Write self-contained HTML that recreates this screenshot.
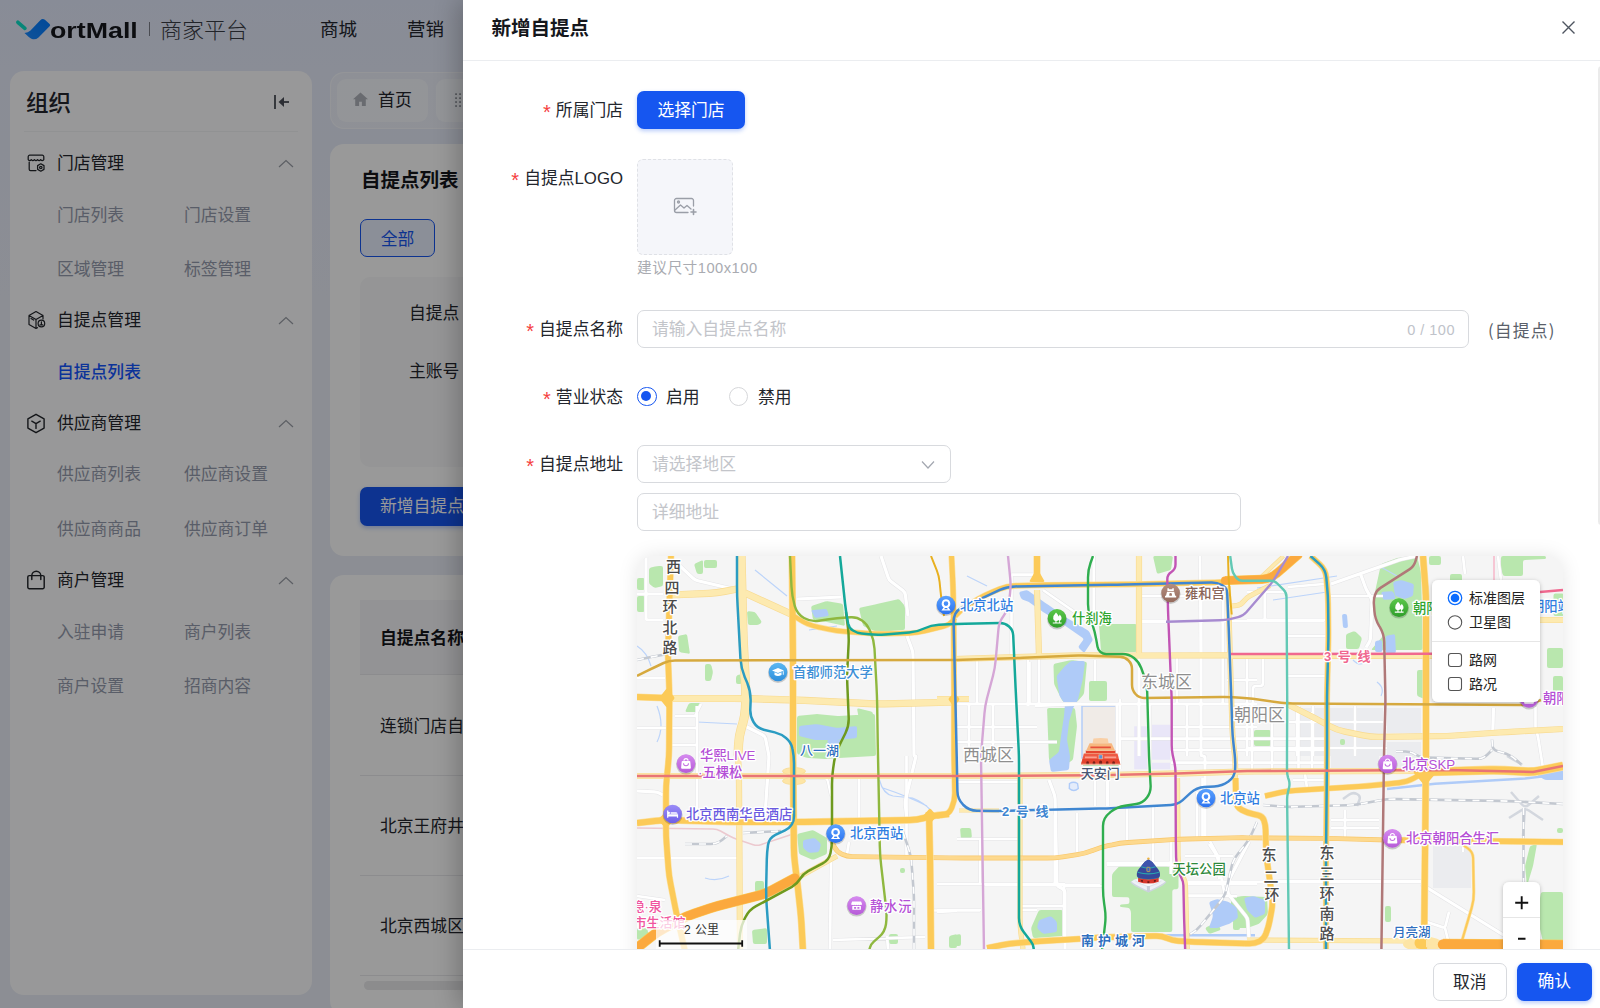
<!DOCTYPE html>
<html lang="zh-CN">
<head>
<meta charset="utf-8">
<title>新增自提点</title>
<style>
*{box-sizing:border-box;margin:0;padding:0}
html,body{width:1600px;height:1008px;overflow:hidden}
body{font-family:"Liberation Sans","Noto Sans CJK SC",sans-serif;color:#1d2129;background:#eef0f8;position:relative}
.abs{position:absolute}
/* ---------- background page ---------- */
#bg{position:absolute;left:0;top:0;width:1600px;height:1008px;background:linear-gradient(180deg,#e3eafc 0,#e6ebfa 70px,#e9edf7 300px,#e9edf7 100%)}
#topbar{position:absolute;left:0;top:0;width:1600px;height:58px}
.t{position:absolute;white-space:nowrap;line-height:1}
.card{position:absolute;background:#fff;border-radius:14px}
#side{left:10px;top:71px;width:302px;height:924px;background:rgba(255,255,255,.93)}
.mg{font-size:16.8px;color:#23262d;left:57px}
.mi{font-size:16.8px;color:#959bad}
.chev{position:absolute;left:278px;width:16px;height:9px}
/* ---------- mask ---------- */
#mask{position:absolute;left:0;top:0;width:1600px;height:1008px;background:rgba(0,0,0,.4)}
/* ---------- drawer ---------- */
#drawer{position:absolute;left:463px;top:0;width:1137px;height:1008px;background:#fff;box-shadow:-6px 0 22px rgba(0,0,0,.22)}
#dhead{position:absolute;left:0;top:0;width:1137px;height:61px;border-bottom:1px solid #ebedf0}
#dfoot{position:absolute;left:0;top:949px;width:1137px;height:59px;border-top:1px solid #ebedf0;background:#fff}
.lab{position:absolute;right:977px;font-size:16.8px;color:#23262d;white-space:nowrap;line-height:1}
.lab i{font-style:normal;color:#f53f3f;margin-right:5px;font-family:"Liberation Sans",sans-serif;font-size:20px;position:relative;top:3px;line-height:0}
.inp{position:absolute;border:1px solid #d8dade;border-radius:7px;background:#fff;height:38px}
.ph{position:absolute;left:14px;top:11px;font-size:16.8px;color:#c3c5ca;line-height:1;white-space:nowrap}
.btn{position:absolute;height:38px;border-radius:7px;font-size:16.8px;line-height:39px;text-align:center;white-space:nowrap}
</style>
</head>
<body>
<div id="bg">
  <div id="topbar">
    <svg class="abs" style="left:0;top:0" width="60" height="50" viewBox="0 0 60 50">
      <defs><linearGradient id="lg1" x1="1" y1="0" x2="0" y2="1"><stop offset="0" stop-color="#007aff"/><stop offset="1" stop-color="#1a8aff"/></linearGradient></defs>
      <path d="M17.900 22.300L24.900 28.400" stroke="#0ce0c8" stroke-width="3.700" stroke-linecap="round" fill="none"/>
      <path d="M24.500 32.900Q28 32.500 30.500 30.400L40.300 20.200Q42.600 17.900 44.900 19.800L49.600 23.900Q50.800 25.100 49.600 26.300L38.500 37.400Q35.500 40 32 39Q30 38.300 28.500 36.800Z" fill="url(#lg1)"/>
    </svg>
    <div class="t" style="left:50px;top:20px;font-size:22.5px;font-weight:700;color:#15171c;font-family:'Liberation Sans',sans-serif;transform:scaleX(1.190);transform-origin:0 0">ortMall</div>
    <div class="abs" style="left:148.500px;top:22px;width:1.500px;height:14px;background:#7c7f89"></div>
    <div class="t" style="left:160px;top:19.5px;font-size:22px;font-weight:300;color:#3a3d45">商家平台</div>
    <div class="t" style="left:320px;top:21px;font-size:18.5px;color:#23262d">商城</div>
    <div class="t" style="left:407px;top:21px;font-size:18.5px;color:#23262d">营销</div>
  </div>

  <!-- sidebar -->
  <div class="card" id="side">
    <div class="t" style="left:16px;top:22px;font-size:22.5px;font-weight:500;color:#23262d">组织</div>
    <svg class="abs" style="left:262px;top:22px" width="20" height="18" viewBox="0 0 20 18"><path d="M3 2v14" stroke="#4a4e57" stroke-width="1.800" fill="none"/><path d="M17 9H8.500" stroke="#4a4e57" stroke-width="1.800" fill="none"/><path d="M12 4L6.500 9l5.500 5z" fill="#4a4e57"/></svg>
    <div class="abs" style="left:14px;top:60px;width:274px;height:1px;background:#f2f3f5"></div>
    <svg class="abs" style="left:16px;top:82px" width="20" height="21" viewBox="0 0 20 21" fill="none" stroke="#22252b" stroke-width="1.25" stroke-linejoin="round" stroke-linecap="round"><path d="M2.200 6.600V3.800a1.600 1.600 0 0 1 1.600-1.600h12.400a1.600 1.600 0 0 1 1.600 1.600v2.800q-1.560 2-3.120 0q-1.560 2-3.120 0q-1.560 2-3.120 0q-1.560 2-3.120 0q-1.560 2-3.120 0z"/><path d="M3.200 9v7.200a1.300 1.300 0 0 0 1.300 1.300h5.500"/><path d="M14.800 10.800l3.200 1.850v3.700l-3.200 1.850-3.200-1.850v-3.700z"/><circle cx="14.800" cy="14.500" r="1.200"/></svg>
    <div class="t mg" style="left:47px;top:85px">门店管理</div>
    <svg class="chev" style="left:268px;top:88px" viewBox="0 0 16 9"><path d="M1 8l7-6.500L15 8" fill="none" stroke="#9a9ea7" stroke-width="1.200"/></svg>
    <svg class="abs" style="left:16px;top:239px" width="20" height="21" viewBox="0 0 20 21" fill="none" stroke="#22252b" stroke-width="1.2" stroke-linejoin="round" stroke-linecap="round"><path d="M17 9V5.500L10 1.500 3 5.500v9l7 4 1.500-.850M3 5.500l7 4 7-4M10 9.500v9M5 8.600l2.600 1.500"/><circle cx="15.400" cy="13.500" r="3.300"/><path d="M15.400 11.800v2.200M14 14.800h2.800"/></svg>
    <div class="t mg" style="left:47px;top:242px">自提点管理</div>
    <svg class="chev" style="left:268px;top:245px" viewBox="0 0 16 9"><path d="M1 8l7-6.500L15 8" fill="none" stroke="#9a9ea7" stroke-width="1.200"/></svg>
    <svg class="abs" style="left:16px;top:341.5px" width="20" height="21" viewBox="0 0 20 21" fill="none" stroke="#22252b" stroke-width="1.4" stroke-linejoin="round" stroke-linecap="round"><path d="M10 1.300l8.100 4.600v9.200L10 19.700l-8.100-4.600V5.900z"/><path d="M5.800 8.200L10 10.600l4.200-2.400M10 10.600v4.800"/></svg>
    <div class="t mg" style="left:47px;top:345px">供应商管理</div>
    <svg class="chev" style="left:268px;top:348px" viewBox="0 0 16 9"><path d="M1 8l7-6.500L15 8" fill="none" stroke="#9a9ea7" stroke-width="1.200"/></svg>
    <svg class="abs" style="left:16px;top:499px" width="20" height="21" viewBox="0 0 20 21" fill="none" stroke="#22252b" stroke-width="1.45" stroke-linejoin="round" stroke-linecap="round"><path d="M3.300 5.600h13.400a1.500 1.500 0 0 1 1.500 1.500v10.200a1.500 1.500 0 0 1-1.500 1.500H3.300a1.500 1.500 0 0 1-1.500-1.500V7.100a1.500 1.500 0 0 1 1.500-1.500z"/><path d="M5.800 9.500V5.700a4.500 4.500 0 0 1 9 0v3.800"/></svg>
    <div class="t mg" style="left:47px;top:502px">商户管理</div>
    <svg class="chev" style="left:268px;top:505px" viewBox="0 0 16 9"><path d="M1 8l7-6.500L15 8" fill="none" stroke="#9a9ea7" stroke-width="1.200"/></svg>
    <div class="t mi" style="left:47px;top:137px">门店列表</div>
    <div class="t mi" style="left:174px;top:137px">门店设置</div>
    <div class="t mi" style="left:47px;top:191px">区域管理</div>
    <div class="t mi" style="left:174px;top:191px">标签管理</div>
    <div class="t" style="left:47px;top:294px;font-size:16.8px;font-weight:500;color:#1455ff">自提点列表</div>
    <div class="t mi" style="left:47px;top:396px">供应商列表</div>
    <div class="t mi" style="left:174px;top:396px">供应商设置</div>
    <div class="t mi" style="left:47px;top:451px">供应商商品</div>
    <div class="t mi" style="left:174px;top:451px">供应商订单</div>
    <div class="t mi" style="left:47px;top:554px">入驻申请</div>
    <div class="t mi" style="left:174px;top:554px">商户列表</div>
    <div class="t mi" style="left:47px;top:608px">商户设置</div>
    <div class="t mi" style="left:174px;top:608px">招商内容</div>
  </div>

  <!-- main -->
  <div class="card" style="left:330px;top:71.500px;width:1260px;height:57px;background:rgba(255,255,255,.3);border:1px solid rgba(255,255,255,.55)"></div>
  <div class="card" style="left:337px;top:78.500px;width:90.500px;height:43.500px;background:rgba(255,255,255,.5);border-radius:9px"></div>
  <div class="card" style="left:435.500px;top:78.500px;width:150px;height:43.500px;background:rgba(255,255,255,.5);border-radius:9px"></div>
  <svg class="abs" style="left:454px;top:92px" width="9" height="16" viewBox="0 0 9 16" fill="#8a8e98"><rect x="1.200" y="1.300" width="1.700" height="1.700"/><rect x="5.200" y="1.300" width="1.700" height="1.700"/><rect x="1.200" y="5.300" width="1.700" height="1.700"/><rect x="5.200" y="5.300" width="1.700" height="1.700"/><rect x="1.200" y="9.200" width="1.700" height="1.700"/><rect x="5.200" y="9.200" width="1.700" height="1.700"/><rect x="1.200" y="13.200" width="1.700" height="1.700"/><rect x="5.200" y="13.200" width="1.700" height="1.700"/></svg>
  <svg class="abs" style="left:352px;top:91px" width="17" height="17" viewBox="0 0 17 17"><path d="M8.5 1.5L1 8.3h2.2V15h3.9v-4.3h2.8V15h3.9V8.3H16z" fill="#b0b3bb"/></svg>
  <div class="t" style="left:378px;top:92px;font-size:17px;color:#23262d">首页</div>
  <div class="card" style="left:330px;top:144px;width:1260px;height:412px"></div>
  <div class="t" style="left:361px;top:171px;font-size:19.5px;font-weight:700;color:#15171c">自提点列表</div>
  <div class="abs" style="left:360px;top:219px;width:75px;height:38px;border:1.5px solid #1656f0;border-radius:7px;background:#e8eefe;color:#1656f0;font-size:16.8px;line-height:39px;text-align:center">全部</div>
  <div class="abs" style="left:360px;top:277px;width:1200px;height:190px;border-radius:10px;background:#f8f9fa"></div>
  <div class="t" style="left:409px;top:306px;font-size:16.8px;color:#23262d">自提点</div>
  <div class="t" style="left:409px;top:364px;font-size:16.8px;color:#23262d">主账号</div>
  <div class="abs" style="left:360px;top:487px;width:140px;height:39px;border-radius:7px;background:#1656f0;color:#fff;font-size:16.8px;line-height:39px;padding-left:20px;white-space:nowrap;box-shadow:0 2px 4px rgba(22,86,240,.3)">新增自提点</div>
  <div class="card" style="left:330px;top:575px;width:1260px;height:440px"></div>
  <div class="abs" style="left:360px;top:600px;width:1200px;height:75px;background:#f5f6f8;border-bottom:1px solid #e9eaed"></div>
  <div class="t" style="left:380px;top:631px;font-size:16.8px;font-weight:700;color:#15171c">自提点名称</div>
  <div class="t" style="left:380px;top:719px;font-size:16.8px;color:#23262d">连锁门店自提点</div>
  <div class="abs" style="left:360px;top:775px;width:1200px;height:1px;background:#e9eaed"></div>
  <div class="t" style="left:380px;top:819px;font-size:16.8px;color:#23262d">北京王府井自提点</div>
  <div class="abs" style="left:360px;top:875px;width:1200px;height:1px;background:#e9eaed"></div>
  <div class="t" style="left:380px;top:919px;font-size:16.8px;color:#23262d">北京西城区自提点</div>
  <div class="abs" style="left:360px;top:975px;width:1200px;height:1px;background:#e9eaed"></div>
  <div class="abs" style="left:364px;top:981px;width:600px;height:9px;border-radius:5px;background:#e9e9ec"></div>
</div>
<div id="mask"></div>

<div id="drawer">
  <div id="dhead">
    <div class="t" style="left:28.500px;top:18.500px;font-size:19.500px;font-weight:700;color:#15171c">新增自提点</div>
    <svg class="abs" style="left:1098px;top:20px" width="15" height="15" viewBox="0 0 15 15"><path d="M1.5 1.5l12 12M13.5 1.5l-12 12" stroke="#4e5560" stroke-width="1.4" fill="none"/></svg>
  </div>
  <div id="dbody" style="position:absolute;left:0;top:0;width:1137px;height:949px;overflow:hidden;clip-path:inset(62px 0 0 0)">
    <!-- row 1 -->
    <div class="lab" style="top:103px"><i>*</i>所属门店</div>
    <div class="btn" style="left:174px;top:91px;width:108px;background:#1656f0;color:#fff;box-shadow:0 2px 4px rgba(22,86,240,.3)">选择门店</div>
    <!-- row 2 -->
    <div class="lab" style="top:171px"><i>*</i>自提点LOGO</div>
    <div class="abs" style="left:174px;top:159px;width:96px;height:96px;border:1px dashed #dfe1e6;border-radius:6px;background:#f5f6fa"></div>
    <svg class="abs" style="left:210px;top:197px" width="24" height="19" viewBox="0 0 24 19" fill="none" stroke="#9a9ea7" stroke-width="1.300" stroke-linecap="round" stroke-linejoin="round"><path d="M20.500 9V3.500a2 2 0 0 0-2-2h-15a2 2 0 0 0-2 2v10a2 2 0 0 0 2 2H15"/><circle cx="5.500" cy="5" r="1"/><path d="M2 13l5.500-5 3.500 3 3-2.500 4 3.500"/><path d="M20.500 12.500v5M18 15h5" stroke-width="1.600"/></svg>
    <div class="t" style="left:174px;top:261px;font-size:14.7px;color:#a9abb1;letter-spacing:.5px">建议尺寸100x100</div>
    <!-- row 3 -->
    <div class="lab" style="top:322px"><i>*</i>自提点名称</div>
    <div class="inp" style="left:174px;top:310px;width:832px"><span class="ph">请输入自提点名称</span><span class="t" style="right:13px;top:12px;font-size:14.5px;color:#c0c3ca;letter-spacing:.5px">0 / 100</span></div>
    <div class="t" style="left:1025px;top:322px;font-size:16.8px;color:#5a5f6a;font-family:'Noto Sans CJK SC',sans-serif;letter-spacing:1.2px">(自提点)</div>
    <!-- row 4 -->
    <div class="lab" style="top:390px"><i>*</i>营业状态</div>
    <div class="abs" style="left:174px;top:386.500px;width:19.500px;height:19.500px;border-radius:50%;border:1.5px solid #1656f0;background:#fff"><div class="abs" style="left:3.250px;top:3.250px;width:10px;height:10px;border-radius:50%;background:#1656f0"></div></div>
    <div class="t" style="left:203px;top:390px;font-size:16.8px;color:#23262d">启用</div>
    <div class="abs" style="left:265.500px;top:386.500px;width:19.500px;height:19.500px;border-radius:50%;border:1px solid #d6d7da;background:#fff"></div>
    <div class="t" style="left:295px;top:390px;font-size:16.8px;color:#23262d">禁用</div>
    <!-- row 5 -->
    <div class="lab" style="top:457px"><i>*</i>自提点地址</div>
    <div class="inp" style="left:174px;top:445px;width:314px"><span class="ph">请选择地区</span><svg class="abs" style="right:15px;top:14px" width="14" height="10" viewBox="0 0 14 10"><path d="M1 1.500l6 6.500 6-6.500" fill="none" stroke="#a3a7b0" stroke-width="1.200"/></svg></div>
    <div class="inp" style="left:174px;top:493px;width:604px"><span class="ph">详细地址</span></div>
    <!-- map -->
    <div id="map" style="position:absolute;left:174px;top:556px;width:926px;height:440px;border-radius:16px;background:#f5f5f5;box-shadow:0 0 20px rgba(0,0,0,.10);overflow:hidden">
    <!--MAPSVG-->
<svg width="926" height="400" viewBox="0 0 926 400" style="position:absolute;left:0;top:0;font-family:'Liberation Sans','Noto Sans CJK SC',sans-serif">
<defs>
<linearGradient id="gBlue" x1="0" y1="0" x2="0" y2="1"><stop offset="0" stop-color="#5aa2ff"/><stop offset="1" stop-color="#2b72f0"/></linearGradient>
<linearGradient id="gSky" x1="0" y1="0" x2="0" y2="1"><stop offset="0" stop-color="#5bb8f2"/><stop offset="1" stop-color="#2f8fdc"/></linearGradient>
<linearGradient id="gGreen" x1="0" y1="0" x2="0" y2="1"><stop offset="0" stop-color="#5cc84a"/><stop offset="1" stop-color="#2f9e2a"/></linearGradient>
<linearGradient id="gBrown" x1="0" y1="0" x2="0" y2="1"><stop offset="0" stop-color="#b58e80"/><stop offset="1" stop-color="#946a5c"/></linearGradient>
<linearGradient id="gPurp" x1="0" y1="0" x2="0" y2="1"><stop offset="0" stop-color="#d68af0"/><stop offset="1" stop-color="#b65ad8"/></linearGradient>
<linearGradient id="gViolet" x1="0" y1="0" x2="0" y2="1"><stop offset="0" stop-color="#9a8cf8"/><stop offset="1" stop-color="#6f5fe6"/></linearGradient>
<filter id="sh" x="-20%" y="-20%" width="140%" height="140%"><feDropShadow dx="0" dy="1" stdDeviation="2" flood-color="#000" flood-opacity=".25"/></filter>
</defs>
<rect width="926" height="400" fill="#f5f5f5"/>
<path d="M658 152L746 152L746 200L658 200ZM694 200L742 200L742 212L694 212ZM796 290L834 290L834 332L796 332ZM750 152L784 152L784 177L750 177ZM750 186L784 186L784 212L750 212Z" fill="#ebecef"/>
<path d="M497.2 170.3L510 170.3L510 181.5L497.2 181.5ZM515 168.8L533.3 168.8L533.3 181.5L515 181.5ZM497.2 185L510 185L510 213.2L497.2 213.2ZM515 183.8L533.3 183.8L533.3 203.7L515 203.7ZM515 206.8L533.3 206.8L533.3 213.2L515 213.2Z" fill="#e9e6f8"/>
<rect x="445" y="150" width="34" height="52" fill="#f0ebe7" stroke="#b4cdf8" stroke-width="1.500"/>
<path d="M13.9 11.5L18.1 10.5Q20 10 22 10L24 10Q26 10 26 12L26 28Q26 30 24.1 30.5L19.9 31.5Q18 32 16.3 30.9L13.7 29.1Q12 28 12 26L12 14Q12 12 13.9 11.5ZM58.8 7.2L64.2 4.8Q66 4 66 6L66 16Q66 18 64 18L62 18Q60 18 59.4 16.1L57.6 9.9Q57 8 58.8 7.2ZM69 4L78 4Q80 4 80 6L80 10Q80 12 78 12L69 12Q67 12 67 10L67 6Q67 4 69 4ZM2 22L6 22Q8 22 8 24L8 32Q8 34 6 34L2 34Q0 34 0 32L0 24Q0 22 2 22ZM2 40L6 40Q8 40 8 42L8 54Q8 56 6 56L2 56Q0 56 0 54L0 42Q0 40 2 40ZM43 79.6L48 78.4Q50 78 50.3 80L52.7 96Q53 98 51 97.6L44 96.4Q42 96 41.9 94L41.1 82Q41 80 43 79.6ZM112 55.2L116 55.8Q118 56 119.1 57.6L123.9 64.4Q125 66 123.6 67.4L123.4 67.6Q122 69 120 69L113 69Q111 69 110.9 67L110.1 57Q110 55 112 55.2ZM70 108L72 108Q74 108 74.5 109.9L75.5 114.1Q76 116 75.6 118L74.4 123Q74 125 72 125L70 125Q68 125 68 123L68 110Q68 108 70 108ZM100.8 119.1L101.2 118.9Q103 118 103.4 120L104.6 126Q105 128 103 128L101 128Q99 128 99 126L99 122Q99 120 100.8 119.1ZM54 147L62 147Q64 147 63.2 148.8L60.8 154.2Q60 156 58 156L50 156Q48 156 48.8 154.2L51.2 148.8Q52 147 54 147ZM175.9 49.4L188.1 45.6Q190 45 192 45.4L204 47.6Q206 48 206.2 50L207.8 68Q208 70 206 69.6L192 66.4Q190 66 188 65.7L178 64.3Q176 64 175.7 62L174.3 52Q174 50 175.9 49.4ZM224 51.6L238 48.4Q240 48 242 47.6L260 43.4Q262 43 263.3 44.5L266.7 48.5Q268 50 268 52L268 72Q268 74 266 74.1L242 75.9Q240 76 238.2 75.2L227.8 70.8Q226 70 225.6 68L222.4 54Q222 52 224 51.6ZM162 159.8L178 158.2Q180 158 182 158.2L198 159.8Q200 160 202 159.9L236 158.1Q238 158 238 160L239 198Q239 200 237 200.1L202 201.9Q200 202 198 202.2L192 202.8Q190 203 188 202.9L172 202.1Q170 202 168.1 201.3L161.9 198.7Q160 198 160 196L160 162Q160 160 162 159.8ZM221.9 152.5L234.1 155.5Q236 156 236 158L236 164Q236 166 234 165.7L224 164.3Q222 164 221.7 162L220.3 154Q220 152 221.9 152.5ZM464 68L498 68Q500 68 500 70L500 94Q500 96 498 96L466 96Q464 96 463.9 94L462.1 70Q462 68 464 68ZM418.4 107.6L432.1 104.4Q434 104 436 104.2L448 105.8Q450 106 449.8 108L447.2 136Q447 138 445.7 139.5L441.3 144.5Q440 146 438 146L428 146Q426 146 425.1 144.2L417.9 129.8Q417 128 417 126L416.5 110Q416.5 108 418.4 107.6ZM454 125L468 125Q470 125 470 127L470 143Q470 145 468 145L454 145Q452 145 452 143L452 127Q452 125 454 125ZM412 152L436 152Q438 152 438.2 154L439.8 168Q440 170 439.8 172L436.2 202Q436 204 434.3 205.1L421.7 212.9Q420 214 418.8 212.4L413.2 205.6Q412 204 411.9 202L410.1 154Q410 152 412 152ZM518 0L534 0Q536 0 535.7 2L534.3 12Q534 14 532.1 14.5L521.9 17.5Q520 18 519.6 16L516.4 2Q516 0 518 0ZM745.9 7.3L758.1 2.7Q760 2 762 1.8L778 0.2Q780 0 780.5 1.9L783.5 14.1Q784 16 784.1 18L785.9 92Q786 94 784 94L736 94Q734 94 735.3 92.5L744.7 81.5Q746 80 745.3 78.1L738.7 61.9Q738 60 738 58L738 38Q738 36 738.4 34L743.6 10Q744 8 745.9 7.3ZM710.9 77.4L716.1 75.6Q718 75 719.4 76.4L723.6 80.6Q725 82 724.5 83.9L722.5 91.1Q722 93 720 93L711 93Q709 93 709 91L709 80Q709 78 710.9 77.4ZM866 0L907.5 0Q909 0 909 1.5L909 1.5Q909 3 907.5 3.1L888 3.9Q886 4 886 6L886 18Q886 20 884 20L868 20Q866 20 865.5 18.1L864.5 13.9Q864 12 864 10L864 2Q864 0 866 0ZM815 18L823 18Q825 18 825 20L825 24Q825 26 823 26L815 26Q813 26 813 24L813 20Q813 18 815 18ZM918.5 37.5L925 37.5Q927 37.5 927 39.5L927 58Q927 60 925 60L918.5 60Q916.5 60 916.5 58L916.5 39.5Q916.5 37.5 918.5 37.5ZM794 0L802 0Q804 0 804 2L804 7Q804 9 802 9L794 9Q792 9 792 7L792 2Q792 0 794 0ZM912 92L924 92Q926 92 926 94L926 110Q926 112 924 112L912 112Q910 112 910 110L910 94Q910 92 912 92ZM918 120L924 120Q926 120 926 122L926 138Q926 140 924 140L918 140Q916 140 916 138L916 122Q916 120 918 120ZM619 174L632 174Q634 174 634 176L634 188Q634 190 632 190L619 190Q617 190 617 188L617 176Q617 174 619 174ZM782 114L788 114Q790 114 790 116L790 142Q790 144 788.1 143.3L781.9 140.7Q780 140 780 138L780 116Q780 114 782 114ZM705 183L706 183Q708 183 708 185L708 187Q708 189 706 189L705 189Q703 189 703 187L703 185Q703 183 705 183ZM161.9 277.5L174.1 274.5Q176 274 177.7 275L188.3 281Q190 282 190 284L190 296Q190 298 188.2 298.8L177.8 303.2Q176 304 174.2 303.2L163.8 298.8Q162 298 161.8 296L160.2 280Q160 278 161.9 277.5ZM120 325L125 325Q127 325 127 327L127 334Q127 336 125 336L120 336Q118 336 118 334L118 327Q118 325 120 325ZM117 373.7L128 372.3Q130 372 130 374L130 386Q130 388 128 388L118 388Q116 388 115.9 386L115.1 376Q115 374 117 373.7ZM265 312L266 312Q268 312 268 314L268 315Q268 317 266 317L265 317Q263 317 263 315L263 314Q263 312 265 312ZM254 378L259 378Q261 378 261 380L261 386Q261 388 259 388L254 388Q252 388 252 386L252 380Q252 378 254 378ZM313.9 379.5L318.1 378.5Q320 378 320 380L320 390Q320 392 318 392L314 392Q312 392 312 390L312 382Q312 380 313.9 379.5ZM2 372L8 372Q10 372 10.5 373.9L11.5 378.1Q12 380 10.1 380.6L1.9 383.4Q0 384 0 382L0 374Q0 372 2 372ZM183 200L191 200Q192 200 192 201L192 201Q192 202 191 202L183 202Q182 202 182 201L182 201Q182 200 183 200ZM476.4 316.5L481.6 311Q483 309.5 485 309.5L527 309.5Q529 309.5 530.8 310.4L539.7 315.1Q541.5 316 541.5 318L541.5 331Q541.5 333 539.5 333.2L537.3 333.3Q535.3 333.5 535.3 335.5L535.3 374Q535.3 376 533.3 376L496 376Q494 376 494 374L494 357.4Q494 355.5 493.2 353.8L493.2 353.8Q492.4 352 490.5 351.8L484.2 351.1Q483 351 483 349.8L483 349.8Q483 348.5 484.2 348.4L490.4 348.1Q492.4 348 492.4 346L492.4 343.2Q492.4 341.2 490.4 341.2L477 341Q475 341 475 339L475 320Q475 318 476.4 316.5ZM404 354L424 354Q426 354 426.1 356L426.9 378Q427 380 425 380.1L398 381.9Q396 382 395.6 380L394.4 374Q394 372 394.8 370.2L401.2 355.8Q402 354 404 354ZM325 272L332 272Q334 272 334.2 274L334.8 280Q335 282 333 282.2L326 282.8Q324 283 323.8 281L323.2 274Q323 272 325 272ZM314 379.7L322 378.3Q324 378 324 380L324 388Q324 390 322 390L314 390Q312 390 312 388L312 382Q312 380 314 379.7ZM596 341.7L604 340.3Q606 340 608 340.1L628 340.9Q630 341 630.1 343L630.9 356Q631 358 629.7 359.5L623.3 366.5Q622 368 620.1 368.6L611.9 371.4Q610 372 608 372L600 372Q598 372 597.4 370.1L594.6 361.9Q594 360 594 358L594 344Q594 342 596 341.7ZM598 365L601 365Q603 365 603 367L603 372Q603 374 601 374L598 374Q596 374 596 372L596 367Q596 365 598 365ZM569.8 371.1L578.2 366.9Q580 366 580.9 367.8L583.1 372.2Q584 374 582.1 374.6L573.9 377.4Q572 378 570.9 376.3L569.1 373.7Q568 372 569.8 371.1ZM906 336L924 336Q926 336 926 338L926 384Q926 386 924 386L908 386Q906 386 905.6 384.1L900.4 361.9Q900 360 900.3 358L903.7 338Q904 336 906 336ZM750 350L752 350Q754 350 754 352L754 364Q754 366 752 366L750 366Q748 366 748 364L748 352Q748 350 750 350ZM922 272L924 272Q926 272 926 274L926 275Q926 277 924 277L922 277Q920 277 920 275L920 274Q920 272 922 272ZM894.9 289.5L898.1 288.5Q900 288 899.6 290L896.4 308Q896 310 895.4 311.9L890.6 328.1Q890 330 889.8 328L888.2 312Q888 310 888.5 308.1L892.5 291.9Q893 290 894.9 289.5Z" fill="#b9e7ae"/>
<path d="M176 53.9L188 53.1Q190 53 190.5 54.9L191.5 58.1Q192 60 190 60.3L180 61.7Q178 62 177.1 60.2L174.9 55.8Q174 54 176 53.9ZM164 169.8L178 168.2Q180 168 182 168.4L198 171.6Q200 172 202 171.8L218 170.2Q220 170 220 172L220 180Q220 182 218 182.2L202 183.8Q200 184 198 184L180 184Q178 184 176.1 183.5L163.9 180.5Q162 180 162 178L162 172Q162 170 164 169.8ZM192 184L202 184Q204 184 203.5 185.9L202.5 190.1Q202 192 200 192L194 192Q192 192 191.5 190.1L190.5 185.9Q190 184 192 184ZM383.9 35.5L388.1 34.5Q390 34 391.6 35.1L408.4 46.9Q410 48 411.6 49.1L428.4 60.9Q430 62 431.7 63L450.3 74Q452 75 452.8 76.8L455.2 82.2Q456 84 454.9 85.6L448.1 95.4Q447 97 445.6 95.6L442.4 92.4Q441 91 442.2 89.4L445.8 84.6Q447 83 445.4 81.8L429.6 70.7Q428 69.5 426.3 68.5L407.7 57Q406 56 404.4 54.8L393.6 47.2Q392 46 390.1 45.3L385.9 43.7Q384 43 383.5 41.1L382.5 37.9Q382 36 383.9 35.5ZM420.8 118.5L426.7 111.5Q428 110 429.5 108.7L432.5 106.3Q434 105 436 105L446 105Q448 105 447.8 107L446.2 120Q446 122 445.6 124L441.4 142Q441 144 439.9 145.7L437.1 150.3Q436 152 435.5 153.9L432.5 164.1Q432 166 431.8 168L430.2 182Q430 184 430.4 186L432.6 198Q433 200 432.9 202L432.1 212Q432 214 430 214.2L416 215.8Q414 216 413.7 214L412.3 206Q412 204 413.6 202.8L420.4 197.2Q422 196 422.2 194L423.8 182Q424 180 424.3 178L426.7 162Q427 160 427.2 158L427.8 150Q428 148 426.9 146.4L423.6 141.6Q422.5 140 422.2 138L419.8 122Q419.5 120 420.8 118.5ZM757.9 25.5L762.1 24.5Q764 24 765.9 24.6L775.1 27.4Q777 28 776.8 30L776.2 38Q776 40 774.1 40.7L769.9 42.3Q768 43 766.1 42.4L759.9 40.6Q758 40 757.7 38L756.3 28Q756 26 757.9 25.5ZM746 35.8L754 35.2Q756 35 756.7 36.9L758.3 41.1Q759 43 757 43.2L748 43.8Q746 44 745.5 42.1L744.5 37.9Q744 36 746 35.8ZM750.5 79.6L756 78.4Q758 78 758.1 80L758.9 95Q759 97 757 97.1L751 97.4Q749 97.5 748.9 95.5L748.6 82Q748.5 80 750.5 79.6ZM740 84.7L743 84.3Q745 84 745.1 86L745.4 94Q745.5 96 743.5 96L740 96Q738 96 738 94L738 87Q738 85 740 84.7ZM707 58L708 58Q710 58 710.1 60L710.9 70Q711 72 709 72L708 72Q706 72 705.9 70L705.1 60Q705 58 707 58ZM168 283.7L176 282.3Q178 282 179.4 283.4L182.6 286.6Q184 288 183.5 289.9L182.5 294.1Q182 296 180 296.2L174 296.8Q172 297 170.5 295.7L167.5 293.3Q166 292 166 290L166 286Q166 284 168 283.7ZM403.9 363.4L412.1 360.6Q414 360 415.4 361.4L418.6 364.6Q420 366 420 368L420 374Q420 376 418 376.3L408 377.7Q406 378 404.6 376.6L401.4 373.4Q400 372 400.5 370.1L401.5 365.9Q402 364 403.9 363.4ZM573.9 345.3L578.1 343.7Q580 343 581.9 343.5L590.1 345.5Q592 346 593.6 347.2L598.4 350.8Q600 352 600.2 354L600.8 360Q601 362 599.3 363.1L593.7 366.9Q592 368 590.1 368.6L581.9 371.4Q580 372 578 372L574 372Q572 372 572.6 370.1L575.4 361.9Q576 360 575.5 358.1L572.5 347.9Q572 346 573.9 345.3ZM609 341.6L614 340.4Q616 340 617.9 340.6L626.1 343.4Q628 344 628 346L628 356Q628 358 626.1 358.7L619.9 361.3Q618 362 616.6 360.6L611.4 355.4Q610 354 609.5 352.1L607.5 343.9Q607 342 609 341.6ZM901.9 218.4L908.1 216.6Q910 216 912 215.8L925 214.2Q927 214 927 216L927 222Q927 224 925 224L910 224Q908 224 906.3 222.9L901.7 220.1Q900 219 901.9 218.4Z" fill="#afcbf8"/>
<path d="M432.500 227.500q4-2.500 8 0l.800 5q-4.500 4-9 0z" fill="#e4ecfb" stroke="#afcbf8" stroke-width="1.400"/>
<path d="M118 14L150 40M0 90Q10 96 14 110M20 150Q28 170 20 186M60 166L100 168M172 74L200 70M330 20L350 30M242.500 224Q246 238 256 240L275.500 242Q286 246 293.500 254M68 322Q80 326 92 320M246 232Q270 240 290 250M620 32L700 20M716 104Q724 112 730 104M740 126Q748 132 744 140M636 44L690 36M742 10L760 20" fill="none" stroke="#bcd4fa" stroke-width="1.200"/>
<path d="M525 379.200L618 379.200M750 233L798 227.700L888 222.500L927 218" fill="none" stroke="#afcbf8" stroke-width="2.400"/>
<path d="M43 10L55.8 22Q58 24 60.9 24.7L96 33M9 0L9 64M0 38L26 38M9 64L26 64M160 43L204 41M244 0L251.1 21.2Q252 24 254.4 25.8L265.6 34.2Q268 36 268.4 39L271 60M270 80L274.9 93.2Q276 96 276 99L277 199Q277 200 278 200L278 200Q279 200 278.8 201L268.7 243.1Q268 246 268.3 249L270 264M0 122L28 122M108 170L125.3 178.7Q128 180 128.6 182.9L131.4 197.1Q132 200 131.8 203L128 260M0 235L17 235.9Q20 236 22.7 237.3L26 239M0 302L100 302M564 30L564 198Q564 200 566 200L566 200Q568 200 568 202L568 280M502 100L502 200M504 66L529 66M320 148L620 148M504 65L687 65M694 28L759.2 5Q762 4 764.9 3.3L780 0M723 16.5L728 30.2Q729 33 730.5 35.6L733.5 40.9Q735 43.5 734.9 46.5L733.6 81Q733.5 84 732 86.6L729 91.5M857 0L857 24M610 64L688 64M856.5 152L855.7 179M412 224L416.9 237.2Q418 240 418.1 243L419.9 327Q420 330 422.7 331.3L425.3 332.7Q428 334 428 337L428 393M612 285.5L592.4 323.3Q591 326 591 329L591 335Q591 338 592.9 340.3L608.6 359.7Q610.5 362 610.7 365L612 383M549 326L684 326M469.5 307.2L534 307.2M418 258.5L418 327.5M347.5 329L463 329M628 325.6L784 325.6M784 328L868 380" fill="none" stroke="#e4e4e6" stroke-width="4.2" stroke-linejoin="round"/>
<path d="M38 160L60 160M0 172L60 172M32 189L60 189M60 150L60 264M64 148L58 160M222 220L222 264M194 306L193 393M196 384L288 381M250 380L251 393M300 356L320 355M212 286L210 298M0 340L28 344M332 148L332 200M391 104L391 150M402 100L402 150M458 104L458 125M586 30L586 100M480 148L480 200M320 171L400 171M534 171L620 171M320 186L420 186M504 40L590 40M590 124L620 124M406 34L452 66M340 104L340 148M356 148L356 200M444 148L398 150M540 100L540 148M512.5 148L512.5 213M550 148L550 200M610 100L610 200M374.5 18.7L374.5 99M374.5 18.7L397 18.7M392.5 106L392.5 148M456.7 0L456.7 60M563 0L564 100M585.7 66L585.7 148M627.7 36L627.7 64M651 31L687 28M861 0L864 24M628 36L628 64M610 36L650 36M626 100L626 127Q626 130 623 130L619 130Q616 130 616 133L616 148M660 150L660 200M676 150L676 200M718 150L718 200M610 192L750 192M652 166L746 166M898.5 150.5L898.5 170Q898.5 173 899.5 175.8L899.7 176.2Q900.7 179 901.2 182L906 212M826 0L828 18M650 80L690 80M650 120L690 120M483 143L483 213M615 149L615 213M635 149L635 213M661.5 150L661.5 213M675 156L675 213M483 182.7L689 182.7M534 194L689 194M534 206.7L689 206.7M565.5 222L565.5 284M471 222L471 250M458 225L458 250M470 225L470 250M516 250L516 330M534 283L534 318M300 328L428 328M300 354L344 354M383 354L400 354M428 330L466 330M470 309L540 309M548 328L620 328M548 340L600 340M320 226L383 226M572 288L578.3 297.5Q580 300 580.6 302.9L588 340M440 257L440 296M490 253L490 284M560 236L560 283M548 300L596 300M549 339.5L588 339.5M516 254L516 306.5M573 285.5L580.6 299.4Q582 302 582 305L582 323M427 329L427 383M385 350L427 350M296.5 354.5L343 354.5M269.5 200L269.5 299M694 264L742 264M694 272L742 272M708 254L708 282M812 356L808.7 369.1Q808 372 805.2 371.1L790 366M808 372L812 388M668 218L670 232M656 224L690 224" fill="none" stroke="#e4e4e6" stroke-width="3.7" stroke-linejoin="round"/>
<path d="M164 222L187 222Q190 222 190.7 224.9L194 240M692 40L746 40M343 283L343 328M320 283L383 283M826 289L826 296" fill="none" stroke="#e4e4e6" stroke-width="3.2" stroke-linejoin="round"/>
<path d="M43 10L55.8 22Q58 24 60.9 24.7L96 33M9 0L9 64M0 38L26 38M9 64L26 64M160 43L204 41M244 0L251.1 21.2Q252 24 254.4 25.8L265.6 34.2Q268 36 268.4 39L271 60M270 80L274.9 93.2Q276 96 276 99L277 199Q277 200 278 200L278 200Q279 200 278.8 201L268.7 243.1Q268 246 268.3 249L270 264M0 122L28 122M108 170L125.3 178.7Q128 180 128.6 182.9L131.4 197.1Q132 200 131.8 203L128 260M0 235L17 235.9Q20 236 22.7 237.3L26 239M0 302L100 302M564 30L564 198Q564 200 566 200L566 200Q568 200 568 202L568 280M502 100L502 200M504 66L529 66M320 148L620 148M504 65L687 65M694 28L759.2 5Q762 4 764.9 3.3L780 0M723 16.5L728 30.2Q729 33 730.5 35.6L733.5 40.9Q735 43.5 734.9 46.5L733.6 81Q733.5 84 732 86.6L729 91.5M857 0L857 24M610 64L688 64M856.5 152L855.7 179M412 224L416.9 237.2Q418 240 418.1 243L419.9 327Q420 330 422.7 331.3L425.3 332.7Q428 334 428 337L428 393M612 285.5L592.4 323.3Q591 326 591 329L591 335Q591 338 592.9 340.3L608.6 359.7Q610.5 362 610.7 365L612 383M549 326L684 326M469.5 307.2L534 307.2M418 258.5L418 327.5M347.5 329L463 329M628 325.6L784 325.6M784 328L868 380" fill="none" stroke="#fff" stroke-width="3.2" stroke-linejoin="round"/>
<path d="M38 160L60 160M0 172L60 172M32 189L60 189M60 150L60 264M64 148L58 160M222 220L222 264M194 306L193 393M196 384L288 381M250 380L251 393M300 356L320 355M212 286L210 298M0 340L28 344M332 148L332 200M391 104L391 150M402 100L402 150M458 104L458 125M586 30L586 100M480 148L480 200M320 171L400 171M534 171L620 171M320 186L420 186M504 40L590 40M590 124L620 124M406 34L452 66M340 104L340 148M356 148L356 200M444 148L398 150M540 100L540 148M512.5 148L512.5 213M550 148L550 200M610 100L610 200M374.5 18.7L374.5 99M374.5 18.7L397 18.7M392.5 106L392.5 148M456.7 0L456.7 60M563 0L564 100M585.7 66L585.7 148M627.7 36L627.7 64M651 31L687 28M861 0L864 24M628 36L628 64M610 36L650 36M626 100L626 127Q626 130 623 130L619 130Q616 130 616 133L616 148M660 150L660 200M676 150L676 200M718 150L718 200M610 192L750 192M652 166L746 166M898.5 150.5L898.5 170Q898.5 173 899.5 175.8L899.7 176.2Q900.7 179 901.2 182L906 212M826 0L828 18M650 80L690 80M650 120L690 120M483 143L483 213M615 149L615 213M635 149L635 213M661.5 150L661.5 213M675 156L675 213M483 182.7L689 182.7M534 194L689 194M534 206.7L689 206.7M565.5 222L565.5 284M471 222L471 250M458 225L458 250M470 225L470 250M516 250L516 330M534 283L534 318M300 328L428 328M300 354L344 354M383 354L400 354M428 330L466 330M470 309L540 309M548 328L620 328M548 340L600 340M320 226L383 226M572 288L578.3 297.5Q580 300 580.6 302.9L588 340M440 257L440 296M490 253L490 284M560 236L560 283M548 300L596 300M549 339.5L588 339.5M516 254L516 306.5M573 285.5L580.6 299.4Q582 302 582 305L582 323M427 329L427 383M385 350L427 350M296.5 354.5L343 354.5M269.5 200L269.5 299M694 264L742 264M694 272L742 272M708 254L708 282M812 356L808.7 369.1Q808 372 805.2 371.1L790 366M808 372L812 388M668 218L670 232M656 224L690 224" fill="none" stroke="#fff" stroke-width="2.7" stroke-linejoin="round"/>
<path d="M164 222L187 222Q190 222 190.7 224.9L194 240M692 40L746 40M343 283L343 328M320 283L383 283M826 289L826 296" fill="none" stroke="#fff" stroke-width="2.2" stroke-linejoin="round"/>
<path d="M874 236L884.7 248.2Q888 252 891.8 248.7L902 240M872 262L883.8 254.6Q888 252 892.2 254.8L906 264M888 252L886 280M706 243L712.3 238.6Q716 236 720 238L720 238Q724 240 722.3 244.2L720 250M870 200L884 208" fill="none" stroke="#d3d7de" stroke-width="2.500" stroke-linejoin="round"/>
<path d="M0 272L76 273Q80 273 83.5 275L92.5 280Q96 282 99.8 283.3L116.2 288.7Q120 290 123.8 288.7L156 278" fill="none" stroke="#ecc9cf" stroke-width="1.500"/>
<path d="M886.5 252L886.5 326M855 183.5L855.4 188.8Q855.7 194 860.8 195.3L865.3 196.5Q873 198.5 879 203.8L885 209M759 195.5L768.6 195.5Q774 195.5 778.5 198.5L778.5 198.5Q783 201.5 788.4 201.6L839.6 202.8Q846 203 850.5 198.5L855 194M0 104L7 102.5Q14 101 21 99.7L30 98M48 288L73.6 288Q80 288 85 284L90 280M106 277L144 275M266 276L271.5 292.4Q274 300 274.6 308L276.4 332Q277 340 277 348L277 393M620 266L615.2 276.7Q612 284 607 290.2L601 297.8Q596 304 594.3 311.8L589.7 332.2Q588 340 582.9 346.2L563.7 369.5Q560 374 555 377L550 380M626 249L642 250.3Q650 251 658 250.8L710 249.2Q718 249 725.9 247.5L742.1 244.5Q750 243 758 243.1L862 244.9Q870 245 878 245.4L926 248" fill="none" stroke="#c3c8d0" stroke-width="2.600"/>
<path d="M886.5 252L886.5 326M855 183.5L855.4 188.8Q855.7 194 860.8 195.3L865.3 196.5Q873 198.5 879 203.8L885 209M759 195.5L768.6 195.5Q774 195.5 778.5 198.5L778.5 198.5Q783 201.5 788.4 201.6L839.6 202.8Q846 203 850.5 198.5L855 194M0 104L7 102.5Q14 101 21 99.7L30 98M48 288L73.6 288Q80 288 85 284L90 280M106 277L144 275M266 276L271.5 292.4Q274 300 274.6 308L276.4 332Q277 340 277 348L277 393M620 266L615.2 276.7Q612 284 607 290.2L601 297.8Q596 304 594.3 311.8L589.7 332.2Q588 340 582.9 346.2L563.7 369.5Q560 374 555 377L550 380M626 249L642 250.3Q650 251 658 250.8L710 249.2Q718 249 725.9 247.5L742.1 244.5Q750 243 758 243.1L862 244.9Q870 245 878 245.4L926 248" fill="none" stroke="#fff" stroke-width="1.600" stroke-dasharray="7 7"/>
<path d="M104 0L105.8 72Q106 80 106.4 88L108.6 132Q109 140 108.6 148L108.4 152Q108 160 105.7 167.7L104.3 172.3Q102 180 101.6 188L101 200" fill="none" stroke="#f8da90" stroke-width="9.2" stroke-linejoin="round"/>
<path d="M101 200L101.6 212Q102 220 102 228L103 395" fill="none" stroke="#f8da90" stroke-width="6.2" stroke-linejoin="round"/>
<path d="M34 39L72 37.3Q80 37 87.8 35.4L100 33" fill="none" stroke="#f8da90" stroke-width="7.2" stroke-linejoin="round"/>
<path d="M108 37L154 58" fill="none" stroke="#f8da90" stroke-width="7.2" stroke-linejoin="round"/>
<path d="M36 142.5L96 142.5Q104 142.5 112 142.7L152 143.8Q160 144 168 144.4L232 147.6Q240 148 248 147.8L320 146" fill="none" stroke="#f8da90" stroke-width="7.2" stroke-linejoin="round"/>
<path d="M0 220L312 220Q320 220 328 220L452 219.2Q460 219.2 468 219L532 217.7Q540 217.5 548 217.3L602 215.7Q610 215.5 618 215.5L786 215" fill="none" stroke="#f8da90" stroke-width="6.2" stroke-linejoin="round"/>
<path d="M317 103L372 101.3Q380 101 388 100.8L432 99.6Q440 99.4 448 99.4L492 99.5Q500 99.5 508 99.5L594 99.3" fill="none" stroke="#f8da90" stroke-width="6.2" stroke-linejoin="round"/>
<path d="M594 100.3L795 100.3" fill="none" stroke="#f8da90" stroke-width="5.2" stroke-linejoin="round"/>
<path d="M400 34L402 100" fill="none" stroke="#f8da90" stroke-width="6.2" stroke-linejoin="round"/>
<path d="M502 0L502 100" fill="none" stroke="#f8da90" stroke-width="6.2" stroke-linejoin="round"/>
<path d="M300 143L332 143" fill="none" stroke="#f8da90" stroke-width="6.2" stroke-linejoin="round"/>
<path d="M200 300L164 320" fill="none" stroke="#f8da90" stroke-width="5.2" stroke-linejoin="round"/>
<path d="M650 148L662.8 154.4Q670 158 677.1 161.8L692.9 170.2Q700 174 707.8 175.6L726.2 179.4Q734 181 742 180.9L802 180.1Q810 180 818 179.5L862 176.5Q870 176 878 175.6L926 173" fill="none" stroke="#f8da90" stroke-width="6.2" stroke-linejoin="round"/>
<path d="M903 64L926 64" fill="none" stroke="#f8da90" stroke-width="6.2" stroke-linejoin="round"/>
<path d="M383 221L383 362Q383 370 384 377.9L386 393" fill="none" stroke="#f8da90" stroke-width="5.2" stroke-linejoin="round"/>
<path d="M322 254.5L362 254.5" fill="none" stroke="#f8da90" stroke-width="4.2" stroke-linejoin="round"/>
<path d="M610 384L776 385" fill="none" stroke="#f8da90" stroke-width="5.2" stroke-linejoin="round"/>
<path d="M540.5 222L541 299.8Q541 306 542.8 312L543.3 314Q544.5 318 546.4 321.6L546.4 321.6Q548.3 325.3 548.4 329.4L549.1 355Q549.3 363 549.5 371L550.3 395" fill="none" stroke="#f8da90" stroke-width="5.2" stroke-linejoin="round"/>
<path d="M595 50L599.7 49.5Q604 49 606.5 45.5L606.5 45.5Q609 42 612.8 40L633 29.5" fill="none" stroke="#f8da90" stroke-width="5.2" stroke-linejoin="round"/>
<path d="M591 30L592.8 92Q593 100 593.3 108L595.2 171Q595.5 179 596.4 187L597.6 198Q598.5 206 598.3 214L598 222" fill="none" stroke="#f8da90" stroke-width="5.7" stroke-linejoin="round"/>
<path d="M646.5 0L622.5 22.5" fill="none" stroke="#f8da90" stroke-width="4.2" stroke-linejoin="round"/>
<path d="M104 0L105.8 72Q106 80 106.4 88L108.6 132Q109 140 108.6 148L108.4 152Q108 160 105.7 167.7L104.3 172.3Q102 180 101.6 188L101 200" fill="none" stroke="#fdeab0" stroke-width="8" stroke-linejoin="round"/>
<path d="M101 200L101.6 212Q102 220 102 228L103 395" fill="none" stroke="#fdeab0" stroke-width="5" stroke-linejoin="round"/>
<path d="M34 39L72 37.3Q80 37 87.8 35.4L100 33" fill="none" stroke="#fdeab0" stroke-width="6" stroke-linejoin="round"/>
<path d="M108 37L154 58" fill="none" stroke="#fdeab0" stroke-width="6" stroke-linejoin="round"/>
<path d="M36 142.5L96 142.5Q104 142.5 112 142.7L152 143.8Q160 144 168 144.4L232 147.6Q240 148 248 147.8L320 146" fill="none" stroke="#fdeab0" stroke-width="6" stroke-linejoin="round"/>
<path d="M0 220L312 220Q320 220 328 220L452 219.2Q460 219.2 468 219L532 217.7Q540 217.5 548 217.3L602 215.7Q610 215.5 618 215.5L786 215" fill="none" stroke="#fdeab0" stroke-width="5" stroke-linejoin="round"/>
<path d="M317 103L372 101.3Q380 101 388 100.8L432 99.6Q440 99.4 448 99.4L492 99.5Q500 99.5 508 99.5L594 99.3" fill="none" stroke="#fdeab0" stroke-width="5" stroke-linejoin="round"/>
<path d="M594 100.3L795 100.3" fill="none" stroke="#fdeab0" stroke-width="4" stroke-linejoin="round"/>
<path d="M400 34L402 100" fill="none" stroke="#fdeab0" stroke-width="5" stroke-linejoin="round"/>
<path d="M502 0L502 100" fill="none" stroke="#fdeab0" stroke-width="5" stroke-linejoin="round"/>
<path d="M300 143L332 143" fill="none" stroke="#fdeab0" stroke-width="5" stroke-linejoin="round"/>
<path d="M200 300L164 320" fill="none" stroke="#fdeab0" stroke-width="4" stroke-linejoin="round"/>
<path d="M650 148L662.8 154.4Q670 158 677.1 161.8L692.9 170.2Q700 174 707.8 175.6L726.2 179.4Q734 181 742 180.9L802 180.1Q810 180 818 179.5L862 176.5Q870 176 878 175.6L926 173" fill="none" stroke="#fdeab0" stroke-width="5" stroke-linejoin="round"/>
<path d="M903 64L926 64" fill="none" stroke="#fdeab0" stroke-width="5" stroke-linejoin="round"/>
<path d="M383 221L383 362Q383 370 384 377.9L386 393" fill="none" stroke="#fdeab0" stroke-width="4" stroke-linejoin="round"/>
<path d="M322 254.5L362 254.5" fill="none" stroke="#fdeab0" stroke-width="3" stroke-linejoin="round"/>
<path d="M610 384L776 385" fill="none" stroke="#fdeab0" stroke-width="4" stroke-linejoin="round"/>
<path d="M540.5 222L541 299.8Q541 306 542.8 312L543.3 314Q544.5 318 546.4 321.6L546.4 321.6Q548.3 325.3 548.4 329.4L549.1 355Q549.3 363 549.5 371L550.3 395" fill="none" stroke="#fdeab0" stroke-width="4" stroke-linejoin="round"/>
<path d="M595 50L599.7 49.5Q604 49 606.5 45.5L606.5 45.5Q609 42 612.8 40L633 29.5" fill="none" stroke="#fdeab0" stroke-width="4" stroke-linejoin="round"/>
<path d="M591 30L592.8 92Q593 100 593.3 108L595.2 171Q595.5 179 596.4 187L597.6 198Q598.5 206 598.3 214L598 222" fill="none" stroke="#fdeab0" stroke-width="4.5" stroke-linejoin="round"/>
<path d="M646.5 0L622.5 22.5" fill="none" stroke="#fdeab0" stroke-width="3" stroke-linejoin="round"/>
<path d="M195 286L197.5 291.1Q200 296 205 298.2L205 298.2Q210 300.5 215.5 300.6L312 301.9Q320 302 328 302L410 302Q418 302 425.9 300.8L440.1 298.7Q448 297.5 455.4 294.5L455.6 294.5Q463 291.5 470.8 289.7L475.2 288.8Q483 287 491 286.5L535 283.7Q543 283.2 551 283L595 281.9Q603 281.7 611 281.8L685 282.4Q693 282.5 701 282.7L750 284" fill="none" stroke="#f9c76a" stroke-width="4.8" stroke-linejoin="round"/>
<path d="M195 286L197.5 291.1Q200 296 205 298.2L205 298.2Q210 300.5 215.5 300.6L312 301.9Q320 302 328 302L410 302Q418 302 425.9 300.8L440.1 298.7Q448 297.5 455.4 294.5L455.6 294.5Q463 291.5 470.8 289.7L475.2 288.8Q483 287 491 286.5L535 283.7Q543 283.2 551 283L595 281.9Q603 281.7 611 281.8L685 282.4Q693 282.5 701 282.7L750 284" fill="none" stroke="#fdd98e" stroke-width="3.6" stroke-linejoin="round"/>
<g fill="#fde5a6" stroke="#f8da90" stroke-width=".800"><ellipse cx="157" cy="215.200" rx="11.500" ry="3.600"/><ellipse cx="157" cy="225" rx="11.500" ry="3.600"/></g>
<ellipse cx="786" cy="388" rx="20" ry="7.500" fill="#fde5a6"/>
<path d="M34 0L32.3 52Q32 60 31.8 68L31.2 92Q31 100 31.3 108L32.2 132Q32.5 140 32.4 148L32.1 192Q32 200 31.2 208L29.8 222Q29 230 29 238L29 272Q29 280 29.6 288L31.4 312Q32 320 33.6 327.8L38.4 352.2Q40 360 41.8 367.8L48 395" fill="none" stroke="#fbe0a0" stroke-width="6.7" stroke-linejoin="round"/>
<path d="M155 0L155.9 92Q156 100 156 108L156 192Q156 200 156.1 208L156.9 292Q157 300 158 307.9L159 316.1Q160 324 160.9 332L163.1 352Q164 360 164.5 368L166 395" fill="none" stroke="#fbe0a0" stroke-width="7.2" stroke-linejoin="round"/>
<path d="M154 58L161.5 63Q166 66 171 68L171 68Q176 70 181.3 71.1L192.2 73.4Q200 75 208 75.6L232 77.4Q240 78 248 77.8L272 77.2Q280 77 287.8 75.1L294 73.5Q300 72 306 70.5L307.5 70.1Q312 69 315 65.5L318 62" fill="none" stroke="#fbe0a0" stroke-width="5.7" stroke-linejoin="round"/>
<path d="M318 60L322 56Q326 52 330.9 49.1L341.1 43.1Q348 39 355.4 36L362.6 33Q370 30 378 29.8L392 29.4Q400 29.2 408 29.1L492 28.3Q500 28.2 508 28L578 26.4Q586 26.2 594 25.5L620 23" fill="none" stroke="#fbe0a0" stroke-width="6.2" stroke-linejoin="round"/>
<path d="M314.5 0L315.6 22Q316 30 316.2 38L316.5 58Q316.7 66 316.7 74L317 132Q317 140 317 148L317 192Q317 200 317.2 208L317.8 236.4Q318 244 315 251L314.4 252.4Q312 258 306 259L300 260" fill="none" stroke="#fbe0a0" stroke-width="6.2" stroke-linejoin="round"/>
<path d="M400 0L400 26" fill="none" stroke="#fbe0a0" stroke-width="7.2" stroke-linejoin="round"/>
<path d="M0 267L18.1 264.9Q26 264 34 264.2L92 265.8Q100 266 108 266L152 266Q160 266 168 265.9L272.7 264.1Q280 264 287 262L287 262Q294 260 301.2 259.2L312 258" fill="none" stroke="#fbe0a0" stroke-width="7.2" stroke-linejoin="round"/>
<path d="M292 256L292.8 292Q293 300 293.1 308L294 393" fill="none" stroke="#fbe0a0" stroke-width="7.2" stroke-linejoin="round"/>
<path d="M598.5 222L599 244.6Q599.2 251 604.9 254L604.9 254Q610.5 257 616.8 258.3L620.8 259.1Q625.5 260 627 264.5L627 264.5Q628.5 269 628.6 273.7L629 291Q629.2 299 630.3 306.9L634.9 339.1Q636 347 634.5 354.9L632.7 364.7Q631.5 371 629.2 377L628.8 378.3Q627 383 622.5 385.2L622.5 385.3Q618 387.5 613 387.5L608 387.5" fill="none" stroke="#fbe0a0" stroke-width="6.7" stroke-linejoin="round"/>
<path d="M350 392L365.1 389Q373 387.5 381 386.9L395 385.8Q403 385.2 411 384.7L432.5 383.5Q440.5 383 448.5 382.5L455 382Q463 381.5 471 381.2L500.5 380.3Q508.5 380 516.5 380L519.3 380Q525 380 530.2 382.2L530.2 382.2Q535.5 384.5 541.2 384.9L550 385.5Q558 386 566 386.2L608 387.5" fill="none" stroke="#fbe0a0" stroke-width="6.7" stroke-linejoin="round"/>
<path d="M673.5 0L682.6 8.1Q688.5 13.5 689.3 21.5L690.2 32Q691 40 691.1 48L691.4 72Q691.5 80 691.3 88L690.2 132Q690 140 690 148L690 192Q690 200 689.9 208L689.1 292Q689 300 689 308L689 395" fill="none" stroke="#fbe0a0" stroke-width="6.2" stroke-linejoin="round"/>
<path d="M786 0L788.4 32Q789 40 789 48L789 192Q789 200 788.9 208L788.1 292Q788 300 787.9 308L787 395" fill="none" stroke="#fbe0a0" stroke-width="7.2" stroke-linejoin="round"/>
<path d="M786 216L852 214.2Q860 214 868 214.4L888 215.6Q896 216 903.8 214.4L926 210" fill="none" stroke="#fbe0a0" stroke-width="9.2" stroke-linejoin="round"/>
<path d="M628 240L642.2 236.8Q650 235 658 234.5L722 230.5Q730 230 738 229.2L762 226.8Q770 226 777 222.1L786 217" fill="none" stroke="#fbe0a0" stroke-width="6.2" stroke-linejoin="round"/>
<path d="M750 284L926 286" fill="none" stroke="#fbe0a0" stroke-width="6.7" stroke-linejoin="round"/>
<path d="M0 141L28 142" fill="none" stroke="#fbe0a0" stroke-width="7.2" stroke-linejoin="round"/>
<path d="M588 25L620 25" fill="none" stroke="#fbe0a0" stroke-width="6.2" stroke-linejoin="round"/>
<path d="M826 289L831 292.5Q836 296 836.1 302.1L836.8 336Q837 344 834.7 351.7L824 388" fill="none" stroke="#fbe0a0" stroke-width="3.2" stroke-linejoin="round"/>
<path d="M34 0L32.3 52Q32 60 31.8 68L31.2 92Q31 100 31.3 108L32.2 132Q32.5 140 32.4 148L32.1 192Q32 200 31.2 208L29.8 222Q29 230 29 238L29 272Q29 280 29.6 288L31.4 312Q32 320 33.6 327.8L38.4 352.2Q40 360 41.8 367.8L48 395" fill="none" stroke="#fcca58" stroke-width="5.5" stroke-linejoin="round"/>
<path d="M155 0L155.9 92Q156 100 156 108L156 192Q156 200 156.1 208L156.9 292Q157 300 158 307.9L159 316.1Q160 324 160.9 332L163.1 352Q164 360 164.5 368L166 395" fill="none" stroke="#fcca58" stroke-width="6" stroke-linejoin="round"/>
<path d="M154 58L161.5 63Q166 66 171 68L171 68Q176 70 181.3 71.1L192.2 73.4Q200 75 208 75.6L232 77.4Q240 78 248 77.8L272 77.2Q280 77 287.8 75.1L294 73.5Q300 72 306 70.5L307.5 70.1Q312 69 315 65.5L318 62" fill="none" stroke="#fcca58" stroke-width="4.5" stroke-linejoin="round"/>
<path d="M318 60L322 56Q326 52 330.9 49.1L341.1 43.1Q348 39 355.4 36L362.6 33Q370 30 378 29.8L392 29.4Q400 29.2 408 29.1L492 28.3Q500 28.2 508 28L578 26.4Q586 26.2 594 25.5L620 23" fill="none" stroke="#fcca58" stroke-width="5" stroke-linejoin="round"/>
<path d="M314.5 0L315.6 22Q316 30 316.2 38L316.5 58Q316.7 66 316.7 74L317 132Q317 140 317 148L317 192Q317 200 317.2 208L317.8 236.4Q318 244 315 251L314.4 252.4Q312 258 306 259L300 260" fill="none" stroke="#fcca58" stroke-width="5" stroke-linejoin="round"/>
<path d="M400 0L400 26" fill="none" stroke="#fcca58" stroke-width="6" stroke-linejoin="round"/>
<path d="M0 267L18.1 264.9Q26 264 34 264.2L92 265.8Q100 266 108 266L152 266Q160 266 168 265.9L272.7 264.1Q280 264 287 262L287 262Q294 260 301.2 259.2L312 258" fill="none" stroke="#fcca58" stroke-width="6" stroke-linejoin="round"/>
<path d="M292 256L292.8 292Q293 300 293.1 308L294 393" fill="none" stroke="#fcca58" stroke-width="6" stroke-linejoin="round"/>
<path d="M598.5 222L599 244.6Q599.2 251 604.9 254L604.9 254Q610.5 257 616.8 258.3L620.8 259.1Q625.5 260 627 264.5L627 264.5Q628.5 269 628.6 273.7L629 291Q629.2 299 630.3 306.9L634.9 339.1Q636 347 634.5 354.9L632.7 364.7Q631.5 371 629.2 377L628.8 378.3Q627 383 622.5 385.2L622.5 385.3Q618 387.5 613 387.5L608 387.5" fill="none" stroke="#fcca58" stroke-width="5.5" stroke-linejoin="round"/>
<path d="M350 392L365.1 389Q373 387.5 381 386.9L395 385.8Q403 385.2 411 384.7L432.5 383.5Q440.5 383 448.5 382.5L455 382Q463 381.5 471 381.2L500.5 380.3Q508.5 380 516.5 380L519.3 380Q525 380 530.2 382.2L530.2 382.2Q535.5 384.5 541.2 384.9L550 385.5Q558 386 566 386.2L608 387.5" fill="none" stroke="#fcca58" stroke-width="5.5" stroke-linejoin="round"/>
<path d="M673.5 0L682.6 8.1Q688.5 13.5 689.3 21.5L690.2 32Q691 40 691.1 48L691.4 72Q691.5 80 691.3 88L690.2 132Q690 140 690 148L690 192Q690 200 689.9 208L689.1 292Q689 300 689 308L689 395" fill="none" stroke="#fcca58" stroke-width="5" stroke-linejoin="round"/>
<path d="M786 0L788.4 32Q789 40 789 48L789 192Q789 200 788.9 208L788.1 292Q788 300 787.9 308L787 395" fill="none" stroke="#fcca58" stroke-width="6" stroke-linejoin="round"/>
<path d="M786 216L852 214.2Q860 214 868 214.4L888 215.6Q896 216 903.8 214.4L926 210" fill="none" stroke="#fcca58" stroke-width="8" stroke-linejoin="round"/>
<path d="M628 240L642.2 236.8Q650 235 658 234.5L722 230.5Q730 230 738 229.2L762 226.8Q770 226 777 222.1L786 217" fill="none" stroke="#fcca58" stroke-width="5" stroke-linejoin="round"/>
<path d="M750 284L926 286" fill="none" stroke="#fcca58" stroke-width="5.5" stroke-linejoin="round"/>
<path d="M0 141L28 142" fill="none" stroke="#fcca58" stroke-width="6" stroke-linejoin="round"/>
<path d="M588 25L620 25" fill="none" stroke="#fcca58" stroke-width="5" stroke-linejoin="round"/>
<path d="M826 289L831 292.5Q836 296 836.1 302.1L836.8 336Q837 344 834.7 351.7L824 388" fill="none" stroke="#fcca58" stroke-width="2" stroke-linejoin="round"/>
<path d="M23.2 140.4L28.8 133.6Q30 132 31.2 133.6L36.8 140.4Q38 142 36.8 143.6L31.2 150.4Q30 152 28.8 150.4L23.2 143.6Q22 142 23.2 140.4ZM21.5 262.7L27.5 257.3Q29 256 30.5 257.3L36.5 262.7Q38 264 36.5 265.3L30.5 270.7Q29 272 27.5 270.7L21.5 265.3Q20 264 21.5 262.7ZM393 24.3L399 13.7Q400 12 401 13.7L407 24.3Q408 26 406 26L394 26Q392 26 393 24.3ZM777.5 214.7L786.5 207.3Q788 206 789.5 207.3L798.5 214.7Q800 216 798.7 217.5L789.3 228.5Q788 230 786.7 228.5L777.3 217.5Q776 216 777.5 214.7ZM287.3 258.5L291.7 253.5Q293 252 294.3 253.5L298.7 258.5Q300 260 298.7 261.5L294.3 266.5Q293 268 291.7 266.5L287.3 261.5Q286 260 287.3 258.5ZM312.4 141.6L315.6 138.4Q317 137 318.4 138.4L321.6 141.6Q323 143 321.8 144.6L318.2 149.4Q317 151 315.8 149.4L312.2 144.6Q311 143 312.4 141.6Z" fill="#fcca58"/>
<circle cx="783.500" cy="387" r="6" fill="#fcca58"/><path d="M789 383.500L796 387.500L789 391.500z" fill="#fde5a6"/>
<path d="M662 -2L652 6.7Q646 12 639.9 17.2L639.1 17.8Q633 23 625 23.3L588 24.5" fill="none" stroke="#fcca58" stroke-width="9.2" stroke-linejoin="round"/>
<path d="M158 322L135.1 334.2Q128 338 120.2 339.9L87.8 348.1Q80 350 72.4 352.5L57.6 357.5Q50 360 42.9 363.8L27.1 372.2Q20 376 13.8 381L0 392" fill="none" stroke="#fcca58" stroke-width="10.2" stroke-linejoin="round"/>
<path d="M806 388.5L926 389.5" fill="none" stroke="#fcca58" stroke-width="11.7" stroke-linejoin="round"/>
<path d="M662 -2L652 6.7Q646 12 639.9 17.2L639.1 17.8Q633 23 625 23.3L588 24.5" fill="none" stroke="#fba93e" stroke-width="8" stroke-linejoin="round" stroke-linecap="round"/>
<path d="M158 322L135.1 334.2Q128 338 120.2 339.9L87.8 348.1Q80 350 72.4 352.5L57.6 357.5Q50 360 42.9 363.8L27.1 372.2Q20 376 13.8 381L0 392" fill="none" stroke="#fba93e" stroke-width="9" stroke-linejoin="round" stroke-linecap="round"/>
<path d="M806 388.5L926 389.5" fill="none" stroke="#fba93e" stroke-width="10.5" stroke-linejoin="round" stroke-linecap="round"/>
<path d="M100 0L100 30Q100 40 100.6 50L103.4 102Q104 112 107.8 121.2L110.2 126.8Q114 136 113.6 146L113.3 153.1Q113 160 116.5 166L116.5 166Q120 172 126.7 173.7L137.8 176.4Q144 178 149 182L149 182Q154 186 155.3 192.3L155.5 193Q157 200 157 207.2L157 260Q157 270 148 274.3L138.4 278.9Q132 282 131 289L131 289Q130 296 129.8 303.1L129.2 330Q129 340 129.7 350L133 395" fill="none" stroke="#2b9cc2" stroke-width="2.5" stroke-linejoin="round"/>
<path d="M153 0L154.5 30.7Q155 40 157.5 49L157.8 50.2Q160 58 167 62L167 62Q174 66 182 64.8L190.1 63.5Q200 62 210 61.5L213.9 61.3Q220 61 225 64.5L225 64.5Q230 68 232.4 73.6L233.5 76Q237 84 237.5 92.7L239.5 130Q240 140 240.2 150L240.8 190Q241 200 241.2 210L242.8 290Q243 300 244.2 309.9L249.1 352Q250 360 249 368L249 368Q248 376 241.9 381.2L236.8 385.6Q234 388 233 391.5L232 395" fill="none" stroke="#8fb83f" stroke-width="2.4" stroke-linejoin="round"/>
<path d="M209 56L211 72.1Q212 80 211.6 88L210.4 112Q210 120 210.3 128L211.7 162Q212 170 208.4 177.2L204.4 185.2Q202 190 200 195L200 195Q198 200 197.2 205.3L196.2 212.1Q195 220 195 228L195 282.8Q195 290 193.5 297L193.5 297Q192 304 185.7 307.4L171.1 315.2Q166 318 163 323L163 323Q160 328 154.9 330.8L119 350.2Q112 354 108.4 361.2L107.6 362.8Q104 370 103 377.9L101 395" fill="none" stroke="#6e9a1f" stroke-width="2.5" stroke-linejoin="round"/>
<path d="M203 0L208.1 48Q209 56 210.5 63.9L211.1 67.4Q212 72 216 74.5L216 74.5Q220 77 224.7 77.5L232 78.2Q240 79 248 78.4L272.2 76.6Q280 76 287 72.5L287 72.5Q294 69 301.8 68.7L312 68.3Q320 68 328 67.8L362.7 67.1Q368 67 372 70.5L372 70.5Q376 74 376.2 79.3L378.6 132Q379 140 379.4 148L381.6 192Q382 200 382 208L382 362Q382 370 386.9 376.3L393.8 385.2Q396 388 396.5 391.5L397 395" fill="none" stroke="#14a89a" stroke-width="2.5" stroke-linejoin="round"/>
<path d="M0 120L10.6 114.7Q16 112 21.4 109.5L26.6 107Q32 104.5 38 104.5L314 104Q320 104 326 103.8L374 102.2Q380 102 386 101.7L434 99.7Q440 99.4 446 99.6L483.1 100.8Q488 101 491.5 104.5L491.5 104.5Q495 108 495 112.9L495 128.7Q495 134 498.5 138L498.5 138Q502 142 507.3 141.9L584 141.1Q590 141 596 141.3L604 141.7Q610 142 615.9 142.8L644.1 146.8Q650 147.6 656 147.6L884 149Q890 149 895.7 147L904 144" fill="none" stroke="#d6a93e" stroke-width="2.5" stroke-linejoin="round"/>
<path d="M319.7 200L316.6 66.4Q316.5 62 318.2 58L318.2 58Q320 54 324 52.1L362.8 33.9Q370 30.5 378 30.4L472 28.8Q480 28.7 488 28.5L574.4 26.6Q580 26.5 585 29L585 29Q590 31.5 590.2 37.1L591.7 72Q592 80 592.3 88L593.7 126Q594 134 594.3 142L595.2 171Q595.5 179 596.4 187L597.7 198.5Q598.5 206 598.1 213.5L598.1 213.5Q597.7 221 591.6 225.3L591.4 225.5Q585 230 577.2 230.5L567.5 231Q559.5 231.5 553.6 236.9L545.4 244.4Q543 246.5 540 247.6L540 247.6Q537 248.7 533.8 248.9L478 252Q470 252.5 462 252.6L422 253.4Q414 253.5 406 253.7L372 254.8Q364 255 356 254.9L340 254.8Q332 254.7 326.4 249L326.1 248.7Q320.5 243 320.4 235L319.7 200" fill="none" stroke="#3f86d1" stroke-width="2.5" stroke-linejoin="round"/>
<path d="M456 0L453.5 7Q451 14 451 21.4L451 48Q451 56 453.6 63.6L455.4 68.4Q458 76 459.3 83.9L460.5 90.8Q461 94 463.5 96L463.5 96Q466 98 469.2 98L485.6 98Q492 98 497 102L497 102Q502 106 504.2 112L507.3 120.5Q510 128 510.2 136L511.8 192Q512 200 512.4 208L513.6 229.2Q514 236 510 241.5L510 241.5Q506 247 499.3 248L487.9 249.8Q480 251 473.7 255.9L472.3 257.1Q466 262 466 270L466 332Q466 340 467.2 347.9L467.8 352.1Q469 360 468.1 367.9L465 395" fill="none" stroke="#2fae4f" stroke-width="2.4" stroke-linejoin="round"/>
<path d="M538.5 0L538.5 8.6Q538.5 13.5 534.4 16.1L534.4 16.1Q530.2 18.7 530.3 23.6L530.9 49Q531 54 531.2 59L534.5 139Q534.7 144 534.7 149L534.7 189Q534.7 194 535.7 198.9L537.5 207.1Q538.5 212 538.5 217L538.8 279Q538.8 284 538.9 289L539.1 301.2Q539.2 306.2 540.5 311L541.3 314.1Q542.4 318.1 544.3 321.7L544.3 321.7Q546.3 325.3 546.4 329.4L547 358Q547.1 363 547.3 368L548.2 395" fill="none" stroke="#c254b5" stroke-width="2.4" stroke-linejoin="round"/>
<path d="M529 65.7L583 64.3Q588 64.2 592.9 63.1L601.1 61.1Q606 60 609.3 56.2L632.7 29.3Q636 25.5 638.5 21.2L651 0" fill="none" stroke="#a78bd0" stroke-width="2.4" stroke-linejoin="round"/>
<path d="M371 0L373.2 22Q374 30 373 37.9L371.9 46.6Q371 54 366.5 60L366.5 60Q362 66 361.4 73.5L358.7 104Q358 112 356 119.7L350 142.3Q348 150 347.4 158L344.6 192Q344 200 344.1 208L347 395" fill="none" stroke="#d5a6d6" stroke-width="2.4" stroke-linejoin="round"/>
<path d="M594 98L795 97.8" fill="none" stroke="#f0688f" stroke-width="2.5" stroke-linejoin="round"/>
<path d="M903 36L926 34" fill="none" stroke="#f0688f" stroke-width="2.4" stroke-linejoin="round"/>
<path d="M593.2 0L594.9 12.5Q595.5 16.5 597.9 19.7L599.1 21.5Q601.5 24.7 605.5 24.7L633.5 24.7Q637.5 24.7 640.3 27.5L646.7 33.9Q649.5 36.7 649.5 40.7L650.2 140Q650.2 144 650.2 148L650 196Q650 200 650 204L650 214Q650 218 651.1 221.8L651.9 224.2Q653 228 652 231.9L651 236.1Q650 240 650.1 244L652 395" fill="none" stroke="#62c9b5" stroke-width="2.4" stroke-linejoin="round"/>
<path d="M673.5 0L682.6 8.1Q688.5 13.5 689.3 21.5L690.2 32Q691 40 691.1 48L691.4 72Q691.5 80 691.3 88L690.2 132Q690 140 690 148L690 192Q690 200 689.9 208L689.1 292Q689 300 689 308L689 395" fill="none" stroke="#2b9cc2" stroke-width="2.5" stroke-linejoin="round"/>
<path d="M780 0L778.5 5.2Q777 10.5 772.4 13.4L743.5 31.9Q739.5 34.5 738 39L738 39Q736.5 43.5 736.9 48.2L737.4 55Q738 63 742.1 69.9L742.9 71.1Q747 78 747.2 86L748.3 136Q748.5 144 748.3 152L747.2 192Q747 200 746.9 208L744.4 395" fill="none" stroke="#b07878" stroke-width="2.5" stroke-linejoin="round"/>
<path d="M0 220L320 220L460 219.2L540 217.5L610 215L810 214L896 216L926 210" fill="none" stroke="#e97475" stroke-width="2.5" stroke-linejoin="round"/>
<path d="M294 0L299.8 14.4Q302 20 302.6 26L303.4 34Q304 40 304.9 45.9L307 60" fill="none" stroke="#e8b020" stroke-width="2" stroke-linejoin="round"/>
<path d="M591 0L591.5 18Q591.7 24 592.2 30L594.7 58.5" fill="none" stroke="#e8b020" stroke-width="2" stroke-linejoin="round"/>
<path d="M857 0L857 24" fill="none" stroke="#f0a0b8" stroke-width="1.2" stroke-linejoin="round"/>
<text x="504" y="132.1" font-size="17" fill="#8e8e8e" font-weight="400" text-anchor="start" stroke="#fff" stroke-width="2.6" stroke-linejoin="round" paint-order="stroke">东城区</text>
<text x="326" y="205.1" font-size="17" fill="#8e8e8e" font-weight="400" text-anchor="start" stroke="#fff" stroke-width="2.6" stroke-linejoin="round" paint-order="stroke">西城区</text>
<text x="597" y="165.1" font-size="17" fill="#8e8e8e" font-weight="400" text-anchor="start" stroke="#fff" stroke-width="2.6" stroke-linejoin="round" paint-order="stroke">朝阳区</text>
<text x="36.5" y="16.4" font-size="15" fill="#4a4a4a" font-weight="500" text-anchor="middle" stroke="#fff" stroke-width="2.6" stroke-linejoin="round" paint-order="stroke">西</text>
<text x="35" y="36.9" font-size="15" fill="#4a4a4a" font-weight="500" text-anchor="middle" stroke="#fff" stroke-width="2.6" stroke-linejoin="round" paint-order="stroke">四</text>
<text x="33" y="56.4" font-size="15" fill="#4a4a4a" font-weight="500" text-anchor="middle" stroke="#fff" stroke-width="2.6" stroke-linejoin="round" paint-order="stroke">环</text>
<text x="33" y="77.4" font-size="15" fill="#4a4a4a" font-weight="500" text-anchor="middle" stroke="#fff" stroke-width="2.6" stroke-linejoin="round" paint-order="stroke">北</text>
<text x="33" y="97.4" font-size="15" fill="#4a4a4a" font-weight="500" text-anchor="middle" stroke="#fff" stroke-width="2.6" stroke-linejoin="round" paint-order="stroke">路</text>
<text x="632" y="304.4" font-size="15" fill="#4d4d4d" font-weight="500" text-anchor="middle" stroke="#fff" stroke-width="2.6" stroke-linejoin="round" paint-order="stroke">东</text>
<text x="634" y="326.4" font-size="15" fill="#4d4d4d" font-weight="500" text-anchor="middle" stroke="#fff" stroke-width="2.6" stroke-linejoin="round" paint-order="stroke">二</text>
<text x="635" y="344.4" font-size="15" fill="#4d4d4d" font-weight="500" text-anchor="middle" stroke="#fff" stroke-width="2.6" stroke-linejoin="round" paint-order="stroke">环</text>
<text x="690" y="302.4" font-size="15" fill="#4d4d4d" font-weight="500" text-anchor="middle" stroke="#fff" stroke-width="2.6" stroke-linejoin="round" paint-order="stroke">东</text>
<text x="690" y="323.4" font-size="15" fill="#4d4d4d" font-weight="500" text-anchor="middle" stroke="#fff" stroke-width="2.6" stroke-linejoin="round" paint-order="stroke">三</text>
<text x="690" y="343.4" font-size="15" fill="#4d4d4d" font-weight="500" text-anchor="middle" stroke="#fff" stroke-width="2.6" stroke-linejoin="round" paint-order="stroke">环</text>
<text x="690" y="363.4" font-size="15" fill="#4d4d4d" font-weight="500" text-anchor="middle" stroke="#fff" stroke-width="2.6" stroke-linejoin="round" paint-order="stroke">南</text>
<text x="690" y="383.4" font-size="15" fill="#4d4d4d" font-weight="500" text-anchor="middle" stroke="#fff" stroke-width="2.6" stroke-linejoin="round" paint-order="stroke">路</text>
<text x="687" y="105.2" font-size="13" fill="#f0688f" font-weight="700" text-anchor="start" letter-spacing="1.5" stroke="#fff" stroke-width="2.6" stroke-linejoin="round" paint-order="stroke">3 号 线</text>
<text x="365" y="260.2" font-size="13" fill="#3f86d1" font-weight="700" text-anchor="start" letter-spacing="1.5" stroke="#fff" stroke-width="2.6" stroke-linejoin="round" paint-order="stroke">2 号 线</text>
<text x="163" y="198.7" font-size="13" fill="#2f6fc0" font-weight="500" text-anchor="start" stroke="#fff" stroke-width="2.6" stroke-linejoin="round" paint-order="stroke">八一湖</text>
<text x="756" y="380.5" font-size="12.5" fill="#2f6fc0" font-weight="500" text-anchor="start" stroke="#fff" stroke-width="2.6" stroke-linejoin="round" paint-order="stroke">月亮湖</text>
<text x="444" y="388.7" font-size="13" fill="#2f6fc0" font-weight="700" text-anchor="start" letter-spacing="4" stroke="#fff" stroke-width="2.6" stroke-linejoin="round" paint-order="stroke">南护城河</text>
<circle cx="141" cy="117" r="10" fill="#000" opacity=".18"/>
<circle cx="141" cy="116" r="9.300" fill="url(#gSky)"/>
<g transform="translate(141 116)" fill="#fff" stroke="none"><path d="M0-4L6-1.500 0 1-6-1.500zM-3.500.200L0 1.700 3.500.200V3Q0 4.800-3.500 3zM4.800-.800h.900v3.600h-.900z"/></g>
<text x="156" y="120.8" font-size="13.3" fill="#3d8fd6" font-weight="500" text-anchor="start" stroke="#fff" stroke-width="2.6" stroke-linejoin="round" paint-order="stroke">首都师范大学</text>
<circle cx="309" cy="50" r="10" fill="#000" opacity=".18"/>
<circle cx="309" cy="49" r="9.300" fill="url(#gBlue)"/>
<g transform="translate(309 49)" fill="#fff" stroke="none"><path d="M0-5.700a4.300 4.300 0 0 1 2.300 7.930L4.600 5.500H-4.600L-2.300 2.230A4.300 4.300 0 0 1 0-5.700zm0 2a2.300 2.300 0 1 0 0 4.600 2.300 2.300 0 0 0 0-4.600zM-1 2.900L-1.800 4.300H1.800L1 2.900z" fill-rule="evenodd"/></g>
<text x="323" y="53.8" font-size="13.3" fill="#2f7de1" font-weight="500" text-anchor="start" stroke="#fff" stroke-width="2.6" stroke-linejoin="round" paint-order="stroke">北京北站</text>
<circle cx="420" cy="63.4" r="10" fill="#000" opacity=".18"/>
<circle cx="420" cy="62.4" r="9.300" fill="url(#gGreen)"/>
<g transform="translate(420 62.4)" fill="#fff" stroke="none"><path d="M-1-5.800Q-4.200-2.600-3.800.400Q-3.500 2.300-1.600 2.500V4H-4.200V5.200H4.600V4H2.800V2.300Q4.400 2 4.500.300Q4.600-1.800 2.800-3.800Q2.200-2.800 1.700-1.800Q1-4-1-5.800zM-.500 2.500Q.800 2.300 1.500 1.500Q1.700 2 2 2.200V4H-.500z" fill-rule="evenodd"/></g>
<text x="435" y="67.3" font-size="13.3" fill="#2fa52f" font-weight="500" text-anchor="start" stroke="#fff" stroke-width="2.6" stroke-linejoin="round" paint-order="stroke">什刹海</text>
<circle cx="533.6" cy="38" r="10" fill="#000" opacity=".18"/>
<circle cx="533.6" cy="37" r="9.300" fill="url(#gBrown)"/>
<g transform="translate(533.6 37)" fill="#fff" stroke="none"><path d="M-3.200-4.800h1.500v1.100h3.400v-1.100h1.500v2.700h-6.400zM-3.600-1.300h7.200L4.600 2.800h1V4.500H-5.600V2.800h1zM0 0a1.300 1.300 0 0 0-1.300 1.300V2.800h2.600V1.300A1.300 1.300 0 0 0 0 0z" fill-rule="evenodd"/></g>
<text x="548" y="41.8" font-size="13.3" fill="#8a6558" font-weight="500" text-anchor="start" stroke="#fff" stroke-width="2.6" stroke-linejoin="round" paint-order="stroke">雍和宫</text>
<circle cx="762" cy="52.6" r="10" fill="#000" opacity=".18"/>
<circle cx="762" cy="51.6" r="9.300" fill="url(#gGreen)"/>
<g transform="translate(762 51.6)" fill="#fff" stroke="none"><path d="M-1-5.800Q-4.200-2.600-3.800.400Q-3.500 2.300-1.600 2.500V4H-4.200V5.200H4.600V4H2.800V2.300Q4.400 2 4.500.300Q4.600-1.800 2.800-3.800Q2.200-2.800 1.700-1.800Q1-4-1-5.800zM-.500 2.500Q.800 2.300 1.500 1.500Q1.700 2 2 2.200V4H-.500z" fill-rule="evenodd"/></g>
<text x="776" y="56.8" font-size="13.3" fill="#2fa52f" font-weight="500" text-anchor="start" stroke="#fff" stroke-width="2.6" stroke-linejoin="round" paint-order="stroke">朝阳公园</text>
<text x="894" y="54.8" font-size="13.3" fill="#2f7de1" font-weight="500" text-anchor="start" stroke="#fff" stroke-width="2.6" stroke-linejoin="round" paint-order="stroke">朝阳站</text>
<circle cx="892" cy="143.5" r="10" fill="#000" opacity=".18"/>
<circle cx="892" cy="142.5" r="9.300" fill="url(#gPurp)"/>
<g transform="translate(892 142.5)" fill="#fff" stroke="none"><path d="M-4.300-1.900Q-4.300-2.700-3.500-2.700H3.500Q4.300-2.700 4.300-1.900L4.900 4.200Q4.900 5.200 3.900 5.200H-3.900Q-4.900 5.200-4.900 4.200zM-2.600-2.900a2.600 2.600 0 0 1 5.200 0h-1.100a1.500 1.500 0 0 0-3 0zM-2 -.300a2 2 0 0 0 4 0h1a3 3 0 0 1-6 0z" fill-rule="evenodd"/></g>
<text x="906" y="147.2" font-size="13.3" fill="#b44fd6" font-weight="500" text-anchor="start" stroke="#fff" stroke-width="2.6" stroke-linejoin="round" paint-order="stroke">朝阳大悦城</text>
<circle cx="49" cy="208.6" r="10" fill="#000" opacity=".18"/>
<circle cx="49" cy="207.6" r="9.300" fill="url(#gPurp)"/>
<g transform="translate(49 207.6)" fill="#fff" stroke="none"><path d="M-4.300-1.900Q-4.300-2.700-3.500-2.700H3.500Q4.300-2.700 4.300-1.900L4.900 4.200Q4.900 5.200 3.900 5.200H-3.900Q-4.900 5.200-4.900 4.200zM-2.600-2.900a2.600 2.600 0 0 1 5.200 0h-1.100a1.500 1.500 0 0 0-3 0zM-2 -.300a2 2 0 0 0 4 0h1a3 3 0 0 1-6 0z" fill-rule="evenodd"/></g>
<text x="63" y="204" font-size="13.3" fill="#b44fd6" font-weight="500" text-anchor="start" stroke="#fff" stroke-width="2.6" stroke-linejoin="round" paint-order="stroke">华熙LIVE</text>
<text x="61" y="221.3" font-size="13.3" fill="#b44fd6" font-weight="500" text-anchor="start" stroke="#fff" stroke-width="2.6" stroke-linejoin="round" paint-order="stroke">·五棵松</text>
<circle cx="35.6" cy="259" r="10" fill="#000" opacity=".18"/>
<circle cx="35.6" cy="258" r="9.300" fill="url(#gViolet)"/>
<g transform="translate(35.6 258)" fill="#fff" stroke="none"><path d="M-5.500-3.500h1.200V.300H5.500V3.800H4.300V2.400h-8.600v1.400h-1.200zM-3.700-2.200a1.100 1.100 0 1 1 0 2.200 1.100 1.100 0 0 1 0-2.200zM-2-1.800H3.500Q5-1.800 5-.300H-2z"/></g>
<text x="49" y="262.8" font-size="13.3" fill="#6a5ae0" font-weight="500" text-anchor="start" stroke="#fff" stroke-width="2.6" stroke-linejoin="round" paint-order="stroke">北京西南华邑酒店</text>
<circle cx="198.6" cy="278.6" r="10" fill="#000" opacity=".18"/>
<circle cx="198.6" cy="277.6" r="9.300" fill="url(#gBlue)"/>
<g transform="translate(198.6 277.6)" fill="#fff" stroke="none"><path d="M0-5.700a4.300 4.300 0 0 1 2.300 7.930L4.600 5.500H-4.600L-2.300 2.230A4.300 4.300 0 0 1 0-5.700zm0 2a2.300 2.300 0 1 0 0 4.600 2.300 2.300 0 0 0 0-4.600zM-1 2.900L-1.800 4.300H1.800L1 2.900z" fill-rule="evenodd"/></g>
<text x="213" y="281.8" font-size="13.3" fill="#2f7de1" font-weight="500" text-anchor="start" stroke="#fff" stroke-width="2.6" stroke-linejoin="round" paint-order="stroke">北京西站</text>
<circle cx="219.6" cy="350.6" r="10" fill="#000" opacity=".18"/>
<circle cx="219.6" cy="349.6" r="9.300" fill="url(#gPurp)"/>
<g transform="translate(219.6 349.6)" fill="#fff" stroke="none"><path d="M-4.500-4h9l1 2.600q-.600 1.200-1.800 .600-.900 .800-1.900 0-.900 .800-1.800 0-.900 .800-1.900 0-.900 .800-1.800 0-1.200.600-1.800-.600zM-4.300.300h8.600V4.200H-4.300zM-2.500 1.500v1.600h2v-1.600zM.800 1.500v1.600h2v-1.600z" fill-rule="evenodd"/></g>
<text x="233" y="354.8" font-size="13.3" fill="#b44fd6" font-weight="500" text-anchor="start" letter-spacing="0.8" stroke="#fff" stroke-width="2.6" stroke-linejoin="round" paint-order="stroke">静水沅</text>
<text x="-5.5" y="354.7" font-size="13" fill="#f0559e" font-weight="500" text-anchor="start" stroke="#fff" stroke-width="2.6" stroke-linejoin="round" paint-order="stroke">隐·泉</text>
<text x="-3.5" y="371.2" font-size="13" fill="#f0559e" font-weight="500" text-anchor="start" stroke="#fff" stroke-width="2.6" stroke-linejoin="round" paint-order="stroke">市生活馆</text>
<circle cx="750.6" cy="209" r="10" fill="#000" opacity=".18"/>
<circle cx="750.6" cy="208" r="9.300" fill="url(#gPurp)"/>
<g transform="translate(750.6 208)" fill="#fff" stroke="none"><path d="M-4.300-1.900Q-4.300-2.700-3.500-2.700H3.500Q4.300-2.700 4.300-1.900L4.900 4.200Q4.900 5.200 3.900 5.200H-3.900Q-4.900 5.200-4.900 4.200zM-2.600-2.900a2.600 2.600 0 0 1 5.200 0h-1.100a1.500 1.500 0 0 0-3 0zM-2 -.300a2 2 0 0 0 4 0h1a3 3 0 0 1-6 0z" fill-rule="evenodd"/></g>
<text x="765" y="212.8" font-size="13.3" fill="#b44fd6" font-weight="500" text-anchor="start" stroke="#fff" stroke-width="2.6" stroke-linejoin="round" paint-order="stroke">北京SKP</text>
<circle cx="755.4" cy="283.4" r="10" fill="#000" opacity=".18"/>
<circle cx="755.4" cy="282.4" r="9.300" fill="url(#gPurp)"/>
<g transform="translate(755.4 282.4)" fill="#fff" stroke="none"><path d="M-4.300-1.900Q-4.300-2.700-3.500-2.700H3.500Q4.300-2.700 4.300-1.900L4.900 4.200Q4.900 5.200 3.900 5.200H-3.900Q-4.900 5.200-4.900 4.200zM-2.600-2.900a2.600 2.600 0 0 1 5.200 0h-1.100a1.500 1.500 0 0 0-3 0zM-2 -.300a2 2 0 0 0 4 0h1a3 3 0 0 1-6 0z" fill-rule="evenodd"/></g>
<text x="769" y="287.2" font-size="13.3" fill="#b44fd6" font-weight="500" text-anchor="start" stroke="#fff" stroke-width="2.6" stroke-linejoin="round" paint-order="stroke">北京朝阳合生汇</text>
<circle cx="569" cy="243" r="10" fill="#000" opacity=".18"/>
<circle cx="569" cy="242" r="9.300" fill="url(#gBlue)"/>
<g transform="translate(569 242)" fill="#fff" stroke="none"><path d="M0-5.700a4.300 4.300 0 0 1 2.300 7.930L4.600 5.500H-4.600L-2.300 2.230A4.300 4.300 0 0 1 0-5.700zm0 2a2.300 2.300 0 1 0 0 4.600 2.300 2.300 0 0 0 0-4.600zM-1 2.900L-1.800 4.300H1.800L1 2.900z" fill-rule="evenodd"/></g>
<text x="583" y="246.8" font-size="13.3" fill="#2f7de1" font-weight="500" text-anchor="start" stroke="#fff" stroke-width="2.6" stroke-linejoin="round" paint-order="stroke">北京站</text>
<g><path d="M446 208.500h35.500v1.200h-35.500z" fill="#a8d8a0"/><path d="M456.500 182.600Q463.600 181.400 470.700 182.600L471.600 187H455.600z" fill="#f9cfa6"/><path d="M452.600 187.200h22L478 194.500H449.200z" fill="#f7b880"/><path d="M453.400 190.500h20.400v1.700h-20.400z" fill="#e8503a"/><path d="M448.800 194.200h29.600v3.400h-29.600z" fill="#e4452f"/><path d="M448.800 194.200h29.600v.800h-29.600zM448.800 197h29.600v.700h-29.600z" fill="#f6dcae"/><path d="M446.800 197.500h33.700L483.300 208.500H444z" fill="#ee5a44"/><path d="M445.600 203h36.100l1.600 5.500H444z" fill="#e4452f"/><path d="M448 200.400h11.800v1.800H448zM467.400 200.400h11.800v1.800h-11.800z" fill="#f9a090"/><rect x="461.900" y="198.900" width="3.400" height="4" fill="#5a8fd8" stroke="#f6dcae" stroke-width=".500"/><path d="M449.300 208.500v-2a1.300 1.300 0 0 1 2.600 0v2zM455.700 208.500v-2a1.300 1.300 0 0 1 2.600 0v2zM462.100 208.500v-2.400a1.500 1.500 0 0 1 3 0v2.400zM468.900 208.500v-2a1.300 1.300 0 0 1 2.600 0v2zM475.300 208.500v-2a1.300 1.300 0 0 1 2.600 0v2z" fill="#7a1f18"/><path d="M444 207.800h39.300v.900H444z" fill="#f3c9b0"/></g>
<g transform="translate(511.400 0)"><path d="M-18 326Q-17 329 0 336.600Q17 329 18 326Q12 321.500 0 321.500Q-12 321.500-18 326z" fill="#cfd5e0"/><path d="M-17 325.500Q-15 328 0 335Q15 328 17 325.500Q11 321 0 321Q-11 321-17 325.500z" fill="#eef1f6"/><path d="M-13.500 325Q-11 327.500 0 331.500Q11 327.500 13.500 325Q8 321 0 321Q-8 321-13.500 325z" fill="#dfe4ec"/><path d="M-12.500 324.500Q-10 326.500 0 330.300Q10 326.500 12.500 324.500Q8 320.500 0 320.500Q-8 320.500-12.500 324.500z" fill="#f7f8fb"/><path d="M-1.500 330h3v5.600l-1.500.700-1.500-.700z" fill="#c9cfdb"/><path d="M-10.300 320.500h20.600v5.200Q0 329.500-10.300 325.700z" fill="#d8382e"/><path d="M-7.500 325.500v-1.600h2v2.200zM-1 327v-1.800h2V327zM5.500 326.100v-2.200h2v1.600z" fill="#6e1a16"/><path d="M-10.300 320.800Q0 323.600 10.300 320.800v1.300Q0 325-10.300 322.100z" fill="#2a9db5"/><path d="M0 303.200Q-4.500 305.500-7.500 310.500Q-11.800 315-11.600 318.500Q-11.900 320.800-10.500 321.400Q0 324.500 10.500 321.400Q11.900 320.800 11.600 318.500Q11.800 315 7.500 310.500Q4.500 305.500 0 303.200z" fill="#36489a"/><path d="M0 303.200Q-4.500 305.500-7.500 310.500Q-2 312 0 312Q2 312 7.500 310.500Q4.500 305.500 0 303.200z" fill="#3f55ad"/><path d="M-7.300 310.700Q0 313.200 7.300 310.700M-10.800 316.200Q0 319.600 10.800 316.200" stroke="#2aa5b0" stroke-width="1.100" fill="none"/><rect x="-1.500" y="311.300" width="3" height="4.300" rx=".400" fill="#3560c8" stroke="#e8b43a" stroke-width=".700"/><circle cx="0" cy="302.600" r="1.200" fill="#f0b440"/></g>
<text x="463.2" y="222" font-size="13" fill="#4a5875" font-weight="500" text-anchor="middle" stroke="#fff" stroke-width="2.6" stroke-linejoin="round" paint-order="stroke">天安门</text>
<text x="535.5" y="318.3" font-size="13.3" fill="#2f8a3c" font-weight="500" text-anchor="start" stroke="#fff" stroke-width="2.6" stroke-linejoin="round" paint-order="stroke">天坛公园</text>
<rect x="19" y="364" width="91" height="36" fill="#fff" opacity=".72"/>
<text x="47" y="378.300" font-size="12" fill="#333" stroke="none" word-spacing="1">2 公里</text>
<path d="M22.200 387.500h83.300M22.700 384.300v6.400M105.200 384.300v6.400" fill="none" stroke="#111" stroke-width="1.800"/>
<g filter="url(#sh)"><rect x="795" y="24" width="108" height="122" rx="6" fill="#fff"/></g>
<path d="M795 85.500h108" stroke="#e6e6e6" stroke-width="1"/>
<circle cx="818" cy="42" r="6.700" fill="#fff" stroke="#0b6cff" stroke-width="1.300"/><circle cx="818" cy="42" r="4.300" fill="#0b6cff"/>
<circle cx="818" cy="66.400" r="6.700" fill="#fff" stroke="#555" stroke-width="1.100"/>
<rect x="811.500" y="97.500" width="13" height="13" rx="2.500" fill="#fff" stroke="#555" stroke-width="1.100"/>
<rect x="811.500" y="121.500" width="13" height="13" rx="2.500" fill="#fff" stroke="#555" stroke-width="1.100"/>
<text x="832" y="47" font-size="14" fill="#222">标准图层</text>
<text x="832" y="71.4" font-size="14" fill="#222">卫星图</text>
<text x="832" y="109" font-size="14" fill="#222">路网</text>
<text x="832" y="133" font-size="14" fill="#222">路况</text>
<g filter="url(#sh)"><rect x="866" y="326" width="37" height="80" rx="6" fill="#fff"/></g>
<path d="M866 361.500h37" stroke="#e6e6e6" stroke-width="1"/>
<path d="M878.200 346.700h13M884.700 340.200v13M881 382.700h7.500" stroke="#111" stroke-width="1.900" fill="none"/>
</svg>
<!--/MAPSVG-->
    </div>
  </div>
  <div class="abs" style="left:1134.500px;top:66px;width:7px;height:459px;border-radius:3.500px;background:#ebebeb"></div>
  <div id="dfoot">
    <div class="btn" style="left:969.500px;top:13px;width:74.500px;line-height:37px;border:1px solid #d8dade;color:#23262d;background:#fff">取消</div>
    <div class="btn" style="left:1054px;top:13px;width:74.500px;line-height:38px;background:#1656f0;color:#fff;box-shadow:0 2px 4px rgba(22,86,240,.3)">确认</div>
  </div>
</div>
</body>
</html>
